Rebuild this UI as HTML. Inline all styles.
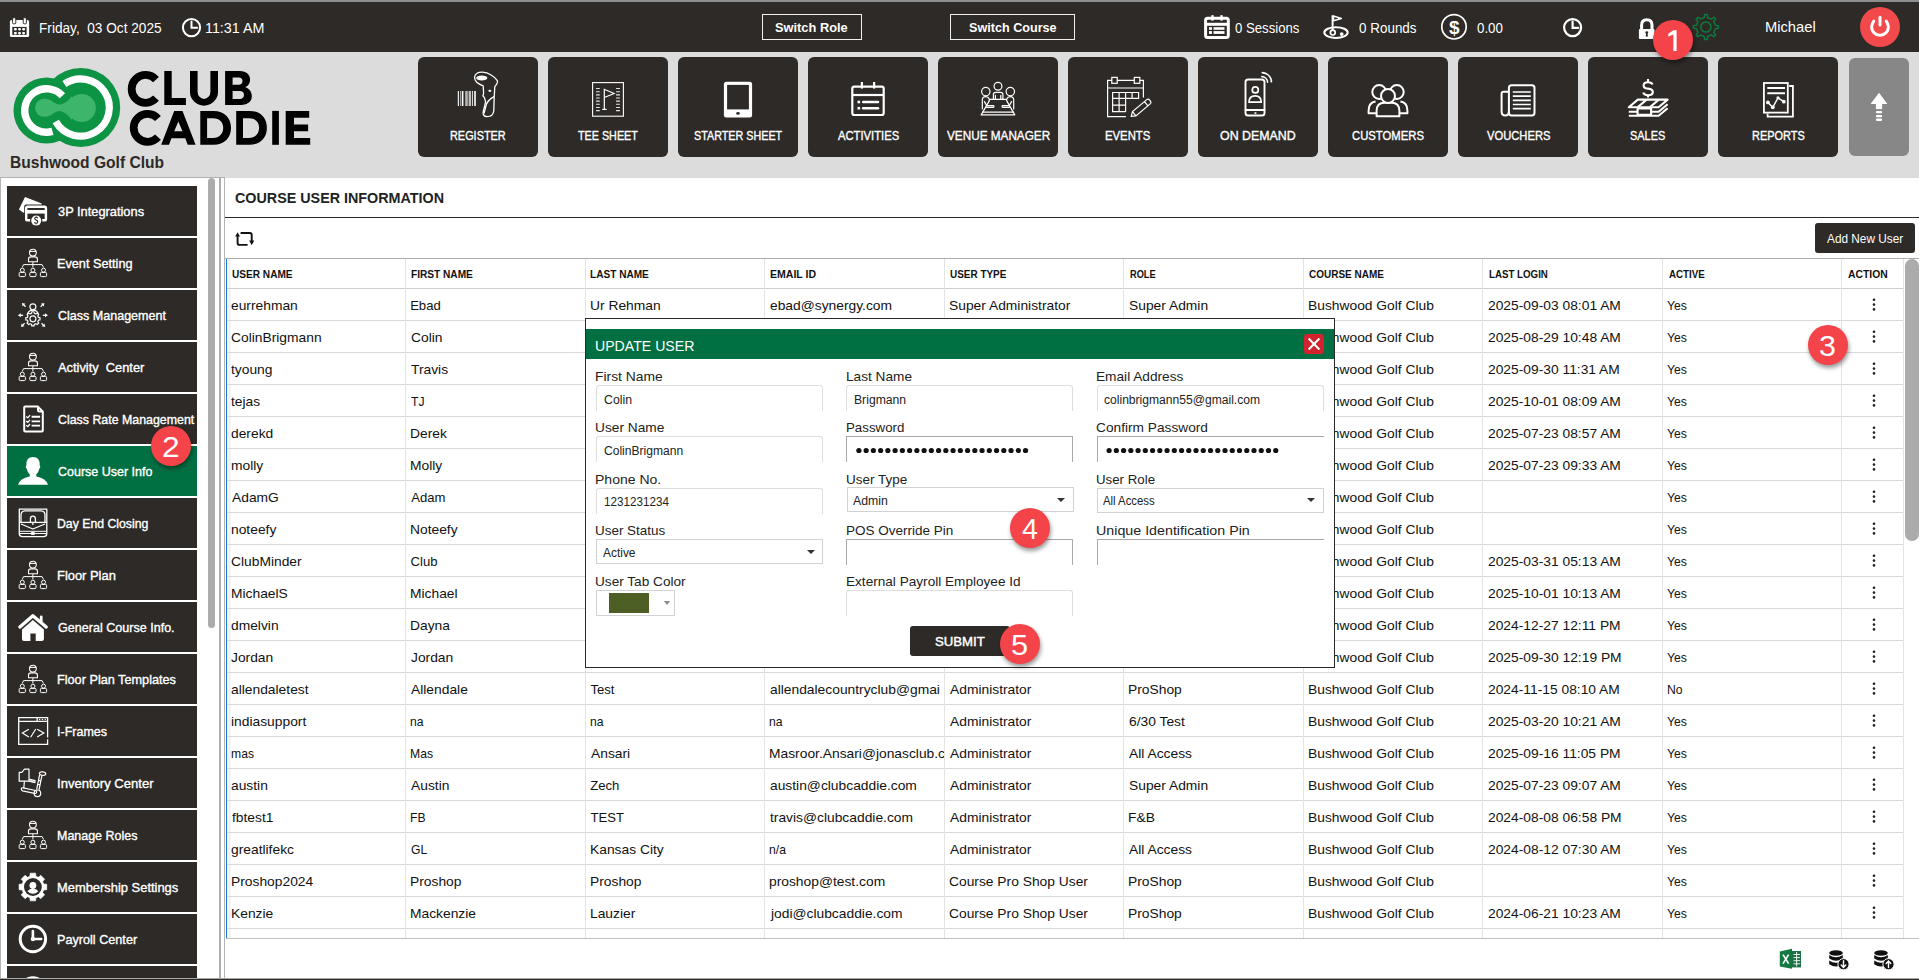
<!DOCTYPE html><html><head><meta charset="utf-8"><style>
*{box-sizing:border-box}
html,body{margin:0;padding:0}
body{width:1919px;height:980px;overflow:hidden;position:relative;font-family:"Liberation Sans",sans-serif;background:#fff;color:#111}
.a{position:absolute}
.tx{position:absolute;white-space:pre}
svg{position:absolute;overflow:visible}
.nb{position:absolute;top:57px;width:120px;height:100px;background:#2d2a27;border-radius:6px}
.si{position:absolute;left:7px;width:190px;height:50px;background:#2d2a27}
.badge{position:absolute;width:40px;height:40px;border-radius:50%;background:#f44449;box-shadow:1px 3px 4px rgba(0,0,0,.4)}
.hl{position:absolute;height:1px;background:#d9d9d9}
.vl{position:absolute;width:1px;background:#e3e3e3}
.inp{position:absolute;width:227px;height:26px;border:1px solid #dedede;border-bottom:none;border-radius:3px 3px 0 0}
.sel{position:absolute;width:227px;height:25px;border:1px solid #d2d2d2}
.caret{position:absolute;width:0;height:0;border-left:4px solid transparent;border-right:4px solid transparent;border-top:4.5px solid #333}
</style></head><body>
<div class="a" style="left:0;top:0;width:1919px;height:2px;background:#8e8e8e"></div>
<div class="a" style="left:0;top:2px;width:1919px;height:50px;background:#2d2a27"></div>
<div class="a" style="left:0;top:52px;width:1919px;height:126px;background:#dcdcdc"></div>
<div class="tx" style="left:38.71px;top:21px;font-size:14px;line-height:14px;color:#fff;transform:scaleX(0.9749);transform-origin:0 0;">Friday,  03 Oct 2025</div>
<div class="tx" style="left:205.43px;top:21px;font-size:14px;line-height:14px;color:#fff;transform:scaleX(1.0232);transform-origin:0 0;">11:31 AM</div>
<div class="a" style="left:762px;top:14px;width:100px;height:26px;border:1.2px solid #f0f0f0"></div>
<div class="tx" style="left:775.28px;top:21px;font-size:13.4px;line-height:13.4px;color:#fff;font-weight:bold;transform:scaleX(0.9578);transform-origin:0 0;">Switch Role</div>
<div class="a" style="left:950px;top:14px;width:125px;height:26px;border:1.2px solid #f0f0f0"></div>
<div class="tx" style="left:968.68px;top:21px;font-size:13.4px;line-height:13.4px;color:#fff;font-weight:bold;transform:scaleX(0.9423);transform-origin:0 0;">Switch Course</div>
<div class="tx" style="left:1235.34px;top:21px;font-size:14px;line-height:14px;color:#fff;transform:scaleX(0.9395);transform-origin:0 0;">0 Sessions</div>
<div class="tx" style="left:1358.73px;top:21px;font-size:14px;line-height:14px;color:#fff;transform:scaleX(0.9603);transform-origin:0 0;">0 Rounds</div>
<div class="tx" style="left:1477.03px;top:21px;font-size:14px;line-height:14px;color:#fff;transform:scaleX(0.9524);transform-origin:0 0;">0.00</div>
<div class="tx" style="left:1764.62px;top:20px;font-size:14px;line-height:14px;color:#fff;transform:scaleX(1.0504);transform-origin:0 0;">Michael</div>
<svg class="a" style="left:0;top:0" width="1919" height="52" viewBox="0 0 1919 52">
<rect x="9.9" y="20" width="19.2" height="17.1" rx="1.6" fill="#fff"/>
<rect x="12.3" y="26.9" width="14.3" height="8" fill="#2d2a27"/>
<g fill="#fff"><rect x="14" y="28" width="2.8" height="2.4" rx=".8"/><rect x="18.1" y="28" width="2.8" height="2.4" rx=".8"/><rect x="22.2" y="28" width="2.8" height="2.4" rx=".8"/>
<rect x="14" y="32" width="2.8" height="2.4" rx=".8"/><rect x="18.1" y="32" width="2.8" height="2.4" rx=".8"/><rect x="22.2" y="32" width="2.8" height="2.4" rx=".8"/></g>
<rect x="12.6" y="17.8" width="3.2" height="6" rx="1" fill="#fff" stroke="#2d2a27" stroke-width="1"/>
<rect x="23.2" y="17.8" width="3.2" height="6" rx="1" fill="#fff" stroke="#2d2a27" stroke-width="1"/>
<circle cx="191.5" cy="27.6" r="8.6" fill="none" stroke="#fff" stroke-width="2"/>
<path d="M191.5,21.6 V27.8 H197.2" fill="none" stroke="#fff" stroke-width="2" stroke-linecap="round"/>
<g fill="none" stroke="#fff">
<rect x="1205.6" y="18.3" width="22.7" height="19.3" rx="2" stroke-width="3"/>
<line x1="1205" y1="24.3" x2="1229" y2="24.3" stroke-width="3"/>
<line x1="1212.5" y1="15.2" x2="1212.5" y2="20.6" stroke-width="2.4"/>
<line x1="1221.5" y1="15.2" x2="1221.5" y2="20.6" stroke-width="2.4"/>
</g>
<g fill="#fff"><rect x="1209" y="27.2" width="3" height="2.6"/><rect x="1213.5" y="27.2" width="11" height="2.6"/><rect x="1209" y="31.1" width="3" height="2.8"/><rect x="1213.5" y="31.1" width="11" height="2.8"/></g>
<g fill="none" stroke="#fff" stroke-width="2">
<ellipse cx="1336" cy="32.6" rx="11.7" ry="5.4"/>
<line x1="1332.6" y1="15.3" x2="1332.6" y2="31"/>
<circle cx="1332.8" cy="32.6" r="2.4" stroke-width="1.7"/>
</g>
<path d="M1333.4,16 L1341.3,18.4 L1333.4,20.7 Z" fill="none" stroke="#fff" stroke-width="1.6" stroke-linejoin="round"/>
<circle cx="1341.7" cy="34.1" r="1.9" fill="#fff"/>
<circle cx="1454" cy="26.8" r="12.2" fill="none" stroke="#fff" stroke-width="1.7"/>
<text x="1454.2" y="33.6" font-size="19" font-weight="bold" text-anchor="middle" fill="#fff" font-family="Liberation Sans">$</text>
<circle cx="1572.6" cy="27.6" r="8.5" fill="none" stroke="#fff" stroke-width="2.2"/>
<path d="M1572.6,21.6 V27.8 H1578.3" fill="none" stroke="#fff" stroke-width="2.2" stroke-linecap="round"/>
<path d="M1641.6,29.5 V25.2 Q1641.6,19.8 1646.8,19.8 Q1652,19.8 1652,25.2 V29.5" fill="none" stroke="#fff" stroke-width="3"/>
<rect x="1638.9" y="28.9" width="15.6" height="10.2" rx="1" fill="#fff"/>
<circle cx="1646.8" cy="32.6" r="1.4" fill="#2d2a27"/><path d="M1646.2,33 L1645.6,36.6 H1648 L1647.4,33 Z" fill="#2d2a27"/>
<path d="M1715.34,25.28 L1718.43,25.72 L1718.43,28.28 L1715.34,28.72 L1713.80,32.46 L1715.67,34.96 L1713.86,36.77 L1711.36,34.90 L1707.62,36.44 L1707.18,39.53 L1704.62,39.53 L1704.18,36.44 L1700.44,34.90 L1697.94,36.77 L1696.13,34.96 L1698.00,32.46 L1696.46,28.72 L1693.37,28.28 L1693.37,25.72 L1696.46,25.28 L1698.00,21.54 L1696.13,19.04 L1697.94,17.23 L1700.44,19.10 L1704.18,17.56 L1704.62,14.47 L1707.18,14.47 L1707.62,17.56 L1711.36,19.10 L1713.86,17.23 L1715.67,19.04 L1713.80,21.54 Z" fill="none" stroke="#0a7a3d" stroke-width="1.5" stroke-linejoin="round"/>
<circle cx="1705.9" cy="27" r="5.1" fill="none" stroke="#0a7a3d" stroke-width="1.5"/>
<circle cx="1880" cy="27" r="20" fill="#f24a4c"/>
<path d="M1873.8,21.2 A8.4,8.4 0 1 0 1886.2,21.2" fill="none" stroke="#fff" stroke-width="3" stroke-linecap="round"/>
<line x1="1880" y1="17.2" x2="1880" y2="25" stroke="#fff" stroke-width="3" stroke-linecap="round"/>
</svg>
<svg class="a" style="left:0;top:52px" width="330" height="126" viewBox="0 52 330 126">
<g fill="#0c9444"><circle cx="46.5" cy="110.5" r="33"/><circle cx="80.7" cy="107.5" r="39.5"/></g>
<path d="M62.4,95.67 A21.75,21.75 0 1 0 52.5,131.4" fill="none" stroke="#fff" stroke-width="7.4"/>
<path d="M64.38,84.02 A28.6,28.6 0 1 1 55.73,121.45" fill="none" stroke="#fff" stroke-width="7.2"/>
<g fill="#3db56a"><circle cx="44" cy="107.8" r="9"/><circle cx="81.8" cy="108" r="14"/>
<path d="M44,98.8 Q50,99 54,102.5 Q57,104.6 60,104.4 Q66,104 72,96 L72,120 Q66,112 60,111 Q57,110.8 54,113 Q50,116.6 44,116.8 Z"/></g>
<g fill="#000" fill-rule="evenodd">
<path d="M155.97,79.57 A13.95,13.95 0 1 0 155.97,98.23" fill="none" stroke="#000" stroke-width="7.8"/>
<path d="M164.3,71.1 H171.7 V97.9 H185.9 V104.9 H164.3 Z"/>
<path d="M190,71.1 H197.6 V91.7 A6.4,7.2 0 0 0 210.4,91.7 V71.1 H218 V91.7 A14,14 0 0 1 190,91.7 Z"/>
<path d="M225.1,71.1 H239.8 C246.5,71.1 250.1,74.8 250.1,79.6 C250.1,83.2 248.2,86 245.2,87.3 C249.3,88.6 251.8,92 251.8,96.2 C251.8,101.6 247.7,104.9 241,104.9 H225.1 Z M232.6,77.5 H238.8 C241.2,77.5 242.5,78.8 242.5,81.1 C242.5,83.4 241.2,84.8 238.8,84.8 H232.6 Z M232.6,91.1 H239.8 C242.5,91.1 244,92.6 244,95 C244,97.4 242.5,98.9 239.8,98.9 H232.6 Z"/>
<path d="M157.97,118.5 A13.95,13.95 0 1 0 157.97,137.2" fill="none" stroke="#000" stroke-width="7.8"/>
<path d="M161.2,144.8 L174.2,110.9 H182.5 L195.6,144.8 H187.7 L185.3,138.2 H171.4 L169,144.8 Z M178.35,121.6 L174.2,131.2 H182.5 Z"/>
<path d="M200.3,110.9 H213.5 C224.5,110.9 231,117.8 231,127.85 C231,137.9 224.5,144.8 213.5,144.8 H200.3 Z M207.1,118.2 H213 C219.5,118.2 223.2,122 223.2,127.85 C223.2,133.9 219.5,138 213,138 H207.1 Z"/>
<path d="M236.2,110.9 H249.4 C260.4,110.9 266.9,117.8 266.9,127.85 C266.9,137.9 260.4,144.8 249.4,144.8 H236.2 Z M243,118.2 H248.9 C255.4,118.2 259.1,122 259.1,127.85 C259.1,133.9 255.4,138 248.9,138 H243 Z"/>
<path d="M272.2,110.9 H278.9 V144.8 H272.2 Z"/>
<path d="M285.7,110.9 H309.2 V117.7 H294 V124.4 H308.1 V131.2 H294 V138 H310.2 V144.8 H285.7 Z"/>
</g>
</svg>
<div class="tx" style="left:9.79px;top:155px;font-size:15.6px;line-height:15.6px;color:#2d2a27;font-weight:bold;transform:scaleX(0.9989);transform-origin:0 0;">Bushwood Golf Club</div>
<div class="nb" style="left:418px"></div>
<svg class="a" style="left:418px;top:57px" width="120" height="100" viewBox="0 0 120 100">
<g fill="none" stroke="#fff" stroke-width="1.3" stroke-linejoin="round">
<path d="M56.6,20.5 C56.6,16.5 60.5,15 64.5,15.2 C70.5,15.6 76.5,19.5 79.3,23.6 C80.2,25.2 78.8,27.3 76.8,29.6 L76.2,40 L75.8,53.5 C75.5,57.5 72.5,59.6 69,59.6 C66,59.6 64.6,57.6 65.2,55 C65.8,52.2 67,48 67.6,44.6 L66.4,40.6 L64.9,38.8 L65.6,36.8 L65.2,28.8 C61.8,27.6 56.6,25.5 56.6,20.5 Z"/>
<path d="M76,39.6 C71.5,42 68.5,45.5 67.8,49.5 L66,56.5"/>
</g>
<ellipse cx="63.8" cy="20.9" rx="5.6" ry="2.5" fill="#fff"/>
<ellipse cx="71.8" cy="33.8" rx="1.5" ry="1.1" fill="#fff"/>
<g fill="#fff">
<rect x="39.8" y="34" width="1.1" height="15"/>
<rect x="42" y="34" width="0.7" height="15" opacity=".8"/>
<rect x="43.8" y="34" width="1.6" height="15"/>
<rect x="47.2" y="34" width="2.6" height="15" opacity=".65"/>
<rect x="50.6" y="34" width="2.5" height="15" opacity=".7"/>
<rect x="54" y="34" width="1" height="15" opacity=".8"/>
<rect x="56.2" y="34" width="1.6" height="15"/>
</g></svg>
<div class="tx" style="left:450.03px;top:130px;font-size:12.6px;line-height:12.6px;color:#fff;transform:scaleX(0.8652);transform-origin:0 0;-webkit-text-stroke:0.35px #fff">REGISTER</div>
<div class="nb" style="left:548px"></div>
<svg class="a" style="left:548px;top:57px" width="120" height="100" viewBox="0 0 120 100"><rect x="44.6" y="25.6" width="30.8" height="33.6" fill="none" stroke="#fff" stroke-width="1.1"/>
<rect x="48" y="31.00" width="3.8" height="1.1" rx=".5" fill="#fff" opacity=".9"/>
<rect x="68" y="31.00" width="4" height="1.1" rx=".5" fill="#fff" opacity=".9"/>
<rect x="48" y="34.15" width="3.8" height="1.1" rx=".5" fill="#fff" opacity=".9"/>
<rect x="68" y="34.15" width="4" height="1.1" rx=".5" fill="#fff" opacity=".9"/>
<rect x="48" y="37.30" width="3.8" height="1.1" rx=".5" fill="#fff" opacity=".9"/>
<rect x="68" y="37.30" width="4" height="1.1" rx=".5" fill="#fff" opacity=".9"/>
<rect x="48" y="40.45" width="3.8" height="1.1" rx=".5" fill="#fff" opacity=".9"/>
<rect x="68" y="40.45" width="4" height="1.1" rx=".5" fill="#fff" opacity=".9"/>
<rect x="48" y="43.60" width="3.8" height="1.1" rx=".5" fill="#fff" opacity=".9"/>
<rect x="68" y="43.60" width="4" height="1.1" rx=".5" fill="#fff" opacity=".9"/>
<rect x="48" y="46.75" width="3.8" height="1.1" rx=".5" fill="#fff" opacity=".9"/>
<rect x="68" y="46.75" width="4" height="1.1" rx=".5" fill="#fff" opacity=".9"/>
<rect x="48" y="49.90" width="3.8" height="1.1" rx=".5" fill="#fff" opacity=".9"/>
<rect x="68" y="49.90" width="4" height="1.1" rx=".5" fill="#fff" opacity=".9"/>
<rect x="48" y="53.05" width="3.8" height="1.1" rx=".5" fill="#fff" opacity=".9"/>
<rect x="68" y="53.05" width="4" height="1.1" rx=".5" fill="#fff" opacity=".9"/>
<g fill="none" stroke="#fff" stroke-width="1.2"><path d="M56.3,52.4 V32.3 L66.1,36.5 L56.3,40.5"/><path d="M54.2,52.4 H58.6"/></g></svg>
<div class="tx" style="left:578.28px;top:130px;font-size:12.6px;line-height:12.6px;color:#fff;transform:scaleX(0.8548);transform-origin:0 0;-webkit-text-stroke:0.35px #fff">TEE SHEET</div>
<div class="nb" style="left:678px"></div>
<svg class="a" style="left:678px;top:57px" width="120" height="100" viewBox="0 0 120 100"><rect x="45.9" y="24.8" width="28.2" height="35.6" rx="2.5" fill="#fff"/>
<rect x="49.1" y="27.9" width="21.8" height="24.5" fill="#2d2a27"/>
<ellipse cx="60" cy="56.4" rx="1.8" ry="1.3" fill="#2d2a27"/></svg>
<div class="tx" style="left:693.52px;top:130px;font-size:12.6px;line-height:12.6px;color:#fff;transform:scaleX(0.8552);transform-origin:0 0;-webkit-text-stroke:0.35px #fff">STARTER SHEET</div>
<div class="nb" style="left:808px"></div>
<svg class="a" style="left:808px;top:57px" width="120" height="100" viewBox="0 0 120 100"><g fill="none" stroke="#fff" stroke-width="2.2">
<rect x="44.3" y="29.6" width="31.4" height="28.4" rx="2"/>
<line x1="44.3" y1="38" x2="75.7" y2="38"/>
<line x1="53.9" y1="25" x2="53.9" y2="31.6"/>
<line x1="66.1" y1="25" x2="66.1" y2="31.6"/>
<line x1="55.2" y1="45" x2="70" y2="45" stroke-linecap="round" stroke-width="2.5"/>
<line x1="55.2" y1="51.2" x2="70" y2="51.2" stroke-linecap="round" stroke-width="2.5"/>
</g>
<rect x="49.5" y="43.7" width="2.6" height="2.6" fill="#fff"/>
<rect x="49.5" y="49.9" width="2.6" height="2.6" fill="#fff"/></svg>
<div class="tx" style="left:837.60px;top:130px;font-size:12.6px;line-height:12.6px;color:#fff;transform:scaleX(0.8928);transform-origin:0 0;-webkit-text-stroke:0.35px #fff">ACTIVITIES</div>
<div class="nb" style="left:938px"></div>
<svg class="a" style="left:938px;top:57px" width="120" height="100" viewBox="0 0 120 100"><g fill="none" stroke="#fff" stroke-width="1.2" stroke-linejoin="round" stroke-linecap="round">
<circle cx="60" cy="29.2" r="3.9"/>
<circle cx="47.8" cy="34.6" r="4.2"/>
<circle cx="72.3" cy="34.6" r="4.2"/>
<path d="M55.4,42.2 V37.6 Q55.4,35.4 57.6,35.4 H62.7 Q64.9,35.4 64.9,37.6 V42.2"/>
<path d="M57.4,42.2 V38.4 M62.8,42.2 V38.4"/>
<path d="M52.2,42.4 H67.8 Q69.2,42.4 68.6,43.6 L76.8,57.9 H43.2 L51.4,43.6 Q50.8,42.4 52.2,42.4 Z"/>
<path d="M44.6,55.2 H75.4"/>
<path d="M44.3,52 V43 Q44.3,39.6 47.8,39.6 Q50.3,39.6 51.3,42"/>
<path d="M46.4,44.6 L48.8,48.6 H55.4 Q56.6,49.4 55.4,50.4 H48.8 L47.6,50"/>
<path d="M75.7,52 V43 Q75.7,39.6 72.2,39.6 Q69.7,39.6 68.7,42"/>
<path d="M73.6,44.6 L71.2,48.6 H64.6 Q63.4,49.4 64.6,50.4 H71.2 L72.4,50"/>
</g></svg>
<div class="tx" style="left:946.60px;top:130px;font-size:12.6px;line-height:12.6px;color:#fff;transform:scaleX(0.9331);transform-origin:0 0;-webkit-text-stroke:0.35px #fff">VENUE MANAGER</div>
<div class="nb" style="left:1068px"></div>
<svg class="a" style="left:1068px;top:57px" width="120" height="100" viewBox="0 0 120 100"><g fill="none" stroke="#fff" stroke-width="1.2">
<path d="M57.9,59.7 H39.6 V23.3 H75.4 V40.5"/>
<line x1="39.6" y1="31" x2="75.4" y2="31"/>
<rect x="43.8" y="20.4" width="5.4" height="5.9" fill="#2d2a27"/>
<rect x="66.3" y="20.4" width="5.5" height="5.9" fill="#2d2a27"/>
<path d="M44.6,35.5 H70.6 V41.4 H44.6 Z M51.1,35.5 V54.7 M57.6,35.5 V54.7 M64.1,35.5 V41.4 M44.6,41.4 V54.7 H57.6 M44.6,48.1 H57.6"/>
<path d="M63.2,59.3 L64.5,54.6 L78.8,42.6 Q80.3,41.4 81.6,43 L82.6,44.3 Q83.6,45.7 82.2,46.9 L67.9,58.9 Z M64.5,54.6 L67.9,58.9 M76.5,44.6 L79.9,48.8"/>
</g></svg>
<div class="tx" style="left:1105.29px;top:130px;font-size:12.6px;line-height:12.6px;color:#fff;transform:scaleX(0.9000);transform-origin:0 0;-webkit-text-stroke:0.35px #fff">EVENTS</div>
<div class="nb" style="left:1198px"></div>
<svg class="a" style="left:1198px;top:57px" width="120" height="100" viewBox="0 0 120 100"><g fill="none" stroke="#fff" stroke-width="1.9" stroke-linecap="round">
<rect x="47.5" y="22.5" width="19" height="36" rx="2.6"/>
<line x1="47.5" y1="53" x2="66.5" y2="53"/>
<circle cx="57.3" cy="32.9" r="3" stroke-width="1.7"/>
<path d="M51,45.2 Q51,38.8 57.1,38.8 Q63.2,38.8 63.2,45.2 Z" stroke-width="1.7"/>
<path d="M63.8,19.6 A6,6 0 0 1 69.6,25.2" stroke-width="1.6"/>
<path d="M64.3,15.6 A10,10 0 0 1 73.4,23.6" stroke-width="1.6"/>
</g>
<ellipse cx="57.4" cy="56.1" rx="1.3" ry=".8" fill="#fff"/>
<circle cx="73.3" cy="24.6" r="1" fill="#fff"/></svg>
<div class="tx" style="left:1220.04px;top:130px;font-size:12.6px;line-height:12.6px;color:#fff;transform:scaleX(0.9835);transform-origin:0 0;-webkit-text-stroke:0.35px #fff">ON DEMAND</div>
<div class="nb" style="left:1328px"></div>
<svg class="a" style="left:1328px;top:57px" width="120" height="100" viewBox="0 0 120 100"><g stroke="#fff" stroke-width="2" stroke-linejoin="round">
<path d="M48,56.3 H40.6 V53.5 Q40.6,45.6 47.6,44.6" fill="none"/>
<path d="M72,56.3 H79.4 V53.5 Q79.4,45.6 72.4,44.6" fill="none"/>
<circle cx="51.2" cy="35" r="6.9" fill="none"/>
<circle cx="68.8" cy="35" r="6.9" fill="none"/>
<path d="M48.6,59.3 V54 Q48.6,45.8 56.5,45.8 H63.5 Q71.4,45.8 71.4,54 V59.3 Z" fill="#2d2a27"/>
<circle cx="60" cy="38.9" r="7" fill="#2d2a27"/>
</g></svg>
<div class="tx" style="left:1352.03px;top:130px;font-size:12.6px;line-height:12.6px;color:#fff;transform:scaleX(0.8973);transform-origin:0 0;-webkit-text-stroke:0.35px #fff">CUSTOMERS</div>
<div class="nb" style="left:1458px"></div>
<svg class="a" style="left:1458px;top:57px" width="120" height="100" viewBox="0 0 120 100"><g fill="none" stroke="#fff" stroke-width="2" stroke-linejoin="round">
<rect x="50.9" y="28.3" width="25.6" height="30.1" rx="2.6"/>
<path d="M50.9,34.7 H45.6 Q43.6,34.7 43.6,36.7 V54.4 Q43.6,58.4 47.3,58.4 Q50.9,58.4 50.9,54.4"/>
<path d="M54.8,35 H72.8 M54.8,39.2 H72.8 M54.8,43.4 H72.8 M54.8,47.5 H72.8 M54.8,51.7 H72.8" stroke-width="1.7"/>
</g></svg>
<div class="tx" style="left:1486.70px;top:130px;font-size:12.6px;line-height:12.6px;color:#fff;transform:scaleX(0.8889);transform-origin:0 0;-webkit-text-stroke:0.35px #fff">VOUCHERS</div>
<div class="nb" style="left:1588px"></div>
<svg class="a" style="left:1588px;top:57px" width="120" height="100" viewBox="0 0 120 100"><g fill="none" stroke="#fff" stroke-width="2.1" stroke-linejoin="round">
<path d="M64.6,27.5 Q63.8,25.2 60,25.2 Q55.6,25.2 55.6,28.4 Q55.6,31.2 60,31.6 Q64.8,32 64.8,35.2 Q64.8,38.2 60,38.2 Q55.9,38.2 55.3,35.6"/>
<path d="M60,22 V25.2 M60,38.2 V40.4"/>
<path d="M40.8,50.3 L49.8,42.6 H79.6 L70.6,50.3 Z"/>
<path d="M49.6,50.3 L58.6,42.6 M61.8,50.3 L70.8,42.6"/>
<path d="M40.8,54.8 H49.6 M63.1,54.8 H70.6 L79.6,47.2"/>
<path d="M40.8,58.8 H70.6 L79.6,51.2"/>
<rect x="49.6" y="51.4" width="13.5" height="6.4" fill="#2d2a27"/>
</g></svg>
<div class="tx" style="left:1630.41px;top:130px;font-size:12.6px;line-height:12.6px;color:#fff;transform:scaleX(0.8683);transform-origin:0 0;-webkit-text-stroke:0.35px #fff">SALES</div>
<div class="nb" style="left:1718px"></div>
<svg class="a" style="left:1718px;top:57px" width="120" height="100" viewBox="0 0 120 100"><g fill="none" stroke="#fff" stroke-width="1.8">
<rect x="45.9" y="26" width="23.9" height="29.6"/>
<path d="M49.6,56.5 V59.6 H74.9 V29 H71.2"/>
<path d="M49.3,31 H67 M49.3,36.2 H67" stroke-width="2"/>
<polyline points="49.9,45.4 54.8,50.3 60,40.8 65.8,44.7" stroke-width="1.4"/>
</g>
<g fill="#fff"><circle cx="49.9" cy="45.4" r="1.9"/><circle cx="54.8" cy="50.3" r="1.9"/><circle cx="60" cy="40.8" r="1.6"/><circle cx="65.8" cy="44.7" r="1.9"/></g></svg>
<div class="tx" style="left:1751.52px;top:130px;font-size:12.6px;line-height:12.6px;color:#fff;transform:scaleX(0.8689);transform-origin:0 0;-webkit-text-stroke:0.35px #fff">REPORTS</div>
<div class="a" style="left:1849px;top:58px;width:60px;height:98px;background:#878787;border-radius:6px"></div>
<svg class="a" style="left:1849px;top:58px" width="60" height="98" viewBox="0 0 60 98"><g fill="#fff">
<polygon points="30,34.8 21.6,46 38.4,46"/>
<rect x="26.9" y="45.5" width="6.2" height="5.6"/>
<rect x="26.9" y="53" width="6.2" height="2.3" rx="1"/>
<rect x="26.9" y="56.9" width="6.2" height="2.3" rx="1"/>
<rect x="26.9" y="60.5" width="6.2" height="2.4" rx="1.2"/>
</g></svg>
<div class="a" style="left:0;top:177px;width:225px;height:803px;background:#fff;border-top:1px solid #b0b0b0"></div>
<div class="a" style="left:0;top:177px;width:1px;height:803px;background:#b4b4b4"></div>
<div class="si" style="top:186px;background:#2d2a27"></div>
<svg class="a" style="left:7px;top:186px" width="50" height="50" viewBox="0 0 50 50"><polygon points="11.9,23.6 18,10.9 34.8,17.4 33.5,22 16.4,26.8" fill="#fff"/>
<rect x="17.2" y="18.5" width="23.7" height="17.6" rx="2" fill="#2d2a27"/>
<rect x="19.2" y="20.7" width="19.7" height="13.6" rx="1.4" fill="#2d2a27" stroke="#fff" stroke-width="2.45"/>
<rect x="19" y="24" width="20.2" height="3.6" fill="#fff"/>
<circle cx="29.2" cy="34.6" r="6.2" fill="#2d2a27"/>
<circle cx="29.2" cy="34.6" r="5" fill="#fff"/>
<path d="M30.8,32.3 Q30.3,31.3 29.2,31.3 Q27.7,31.3 27.7,32.6 Q27.7,33.8 29.2,34.1 Q30.8,34.4 30.8,35.8 Q30.8,37.2 29.2,37.2 Q27.9,37.2 27.5,36.2 M29.2,30.2 V31.3 M29.2,37.2 V38.3" fill="none" stroke="#2d2a27" stroke-width="1.1"/></svg>
<div class="tx" style="left:57.95px;top:206px;font-size:12.8px;line-height:12.8px;color:#fff;transform:scaleX(1.0024);transform-origin:0 0;-webkit-text-stroke:0.35px #fff">3P Integrations</div>
<div class="si" style="top:238px;background:#2d2a27"></div>
<svg class="a" style="left:7px;top:238px" width="50" height="50" viewBox="0 0 50 50"><g fill="none" stroke="#fff" stroke-width="1.1">
<circle cx="25.9" cy="14.6" r="3.4"/>
<path d="M22.6,13.4 H29.2"/>
<path d="M21.5,23.8 V21 Q21.5,18.9 24,18.9 H27.9 Q30.4,18.9 30.4,21 V23.8 Z"/>
<path d="M25.9,23.8 V29.4 M15.2,29.5 L16.6,26.6 H35.1 L36.6,29.5" stroke-width="1"/>
<g stroke-width="1">
<circle cx="15.3" cy="32.2" r="2"/><rect x="12.2" y="34.4" width="6.2" height="4.2" rx="1"/>
<circle cx="25.9" cy="32.2" r="2"/><rect x="22.8" y="34.4" width="6.2" height="4.2" rx="1"/>
<circle cx="36.5" cy="32.2" r="2"/><rect x="33.4" y="34.4" width="6.2" height="4.2" rx="1"/>
</g></g></svg>
<div class="tx" style="left:57.38px;top:258px;font-size:12.8px;line-height:12.8px;color:#fff;transform:scaleX(0.9919);transform-origin:0 0;-webkit-text-stroke:0.35px #fff">Event Setting</div>
<div class="si" style="top:290px;background:#2d2a27"></div>
<svg class="a" style="left:7px;top:290px" width="50" height="50" viewBox="0 0 50 50"><g fill="none" stroke="#fff" stroke-width="1.15">
<path d="M31.44,27.47 L33.00,27.62 L33.00,29.98 L31.44,30.13 L30.76,31.78 L31.76,32.99 L30.09,34.66 L28.88,33.66 L27.23,34.34 L27.08,35.90 L24.72,35.90 L24.57,34.34 L22.92,33.66 L21.71,34.66 L20.04,32.99 L21.04,31.78 L20.36,30.13 L18.80,29.98 L18.80,27.62 L20.36,27.47 L21.04,25.82 L20.04,24.61 L21.71,22.94 L22.92,23.94 L24.57,23.26 L24.72,21.70 L27.08,21.70 L27.23,23.26 L28.88,23.94 L30.09,22.94 L31.76,24.61 L30.76,25.82 Z" stroke-linejoin="round"/>
<circle cx="25.9" cy="28.8" r="3.0"/>
<path d="M20.4,24.4 A5.6,5.2 0 0 1 31.4,24.4"/>
<circle cx="25.9" cy="16.8" r="3.0"/></g>
<polygon points="14.90,13.00 18.44,13.71 15.61,16.54" fill="#fff"/><line x1="17.02" y1="15.12" x2="18.58" y2="16.68" stroke="#fff" stroke-width="1.3"/><polygon points="37.40,13.00 36.69,16.54 33.86,13.71" fill="#fff"/><line x1="35.28" y1="15.12" x2="33.72" y2="16.68" stroke="#fff" stroke-width="1.3"/><polygon points="10.90,25.30 13.90,23.30 13.90,27.30" fill="#fff"/><line x1="13.90" y1="25.30" x2="16.10" y2="25.30" stroke="#fff" stroke-width="1.3"/><polygon points="41.00,25.30 38.00,27.30 38.00,23.30" fill="#fff"/><line x1="38.00" y1="25.30" x2="35.80" y2="25.30" stroke="#fff" stroke-width="1.3"/><polygon points="13.90,37.00 14.61,33.46 17.44,36.29" fill="#fff"/><line x1="16.02" y1="34.88" x2="17.58" y2="33.32" stroke="#fff" stroke-width="1.3"/><polygon points="38.20,37.00 34.66,36.29 37.49,33.46" fill="#fff"/><line x1="36.08" y1="34.88" x2="34.52" y2="33.32" stroke="#fff" stroke-width="1.3"/></svg>
<div class="tx" style="left:57.77px;top:310px;font-size:12.8px;line-height:12.8px;color:#fff;transform:scaleX(0.9787);transform-origin:0 0;-webkit-text-stroke:0.35px #fff">Class Management</div>
<div class="si" style="top:342px;background:#2d2a27"></div>
<svg class="a" style="left:7px;top:342px" width="50" height="50" viewBox="0 0 50 50"><g fill="none" stroke="#fff" stroke-width="1.1">
<circle cx="25.9" cy="14.6" r="3.4"/>
<path d="M22.6,13.4 H29.2"/>
<path d="M21.5,23.8 V21 Q21.5,18.9 24,18.9 H27.9 Q30.4,18.9 30.4,21 V23.8 Z"/>
<path d="M25.9,23.8 V29.4 M15.2,29.5 L16.6,26.6 H35.1 L36.6,29.5" stroke-width="1"/>
<g stroke-width="1">
<circle cx="15.3" cy="32.2" r="2"/><rect x="12.2" y="34.4" width="6.2" height="4.2" rx="1"/>
<circle cx="25.9" cy="32.2" r="2"/><rect x="22.8" y="34.4" width="6.2" height="4.2" rx="1"/>
<circle cx="36.5" cy="32.2" r="2"/><rect x="33.4" y="34.4" width="6.2" height="4.2" rx="1"/>
</g></g></svg>
<div class="tx" style="left:58.40px;top:362px;font-size:12.8px;line-height:12.8px;color:#fff;transform:scaleX(1.0036);transform-origin:0 0;-webkit-text-stroke:0.35px #fff">Activity&nbsp; Center</div>
<div class="si" style="top:394px;background:#2d2a27"></div>
<svg class="a" style="left:7px;top:394px" width="50" height="50" viewBox="0 0 50 50"><g fill="none" stroke="#fff" stroke-width="2" stroke-linejoin="round">
<path d="M18.2,12.6 H31 L35.8,17.6 V36.4 Q35.8,37.4 34.8,37.4 H18.2 Q17.2,37.4 17.2,36.4 V13.6 Q17.2,12.6 18.2,12.6 Z"/>
<path d="M31,12.8 V16.2 Q31,17.6 32.4,17.6 H35.6"/>
<path d="M24.6,22.8 H33.1 M24.6,27.4 H33.1 M24.6,31.6 H33.1" stroke-width="1.9"/>
<path d="M19.2,22.4 L20.8,23.8 L23,21.2 M19.2,27 L20.8,28.4 L23,25.8 M19.2,31.2 L20.8,32.6 L23,30" stroke-width="1.3"/>
</g></svg>
<div class="tx" style="left:57.78px;top:414px;font-size:12.8px;line-height:12.8px;color:#fff;transform:scaleX(0.9677);transform-origin:0 0;-webkit-text-stroke:0.35px #fff">Class Rate Management</div>
<div class="si" style="top:446px;background:#007043"></div>
<svg class="a" style="left:7px;top:446px" width="50" height="50" viewBox="0 0 50 50"><path d="M11.1,38.8 Q12.8,32.6 22.6,30.6 L22.8,28.6 Q20.2,25.8 19.6,22.6 Q18.6,22 18.8,20.4 Q19,19.4 19.4,19.2 Q19,11 26,11 Q33,11 32.7,19.2 Q33.1,19.4 33.2,20.4 Q33.4,22 32.4,22.6 Q31.8,25.8 29.2,28.6 L29.4,30.6 Q39.2,32.6 41,38.8 Z" fill="#fff"/></svg>
<div class="tx" style="left:57.78px;top:466px;font-size:12.8px;line-height:12.8px;color:#fff;transform:scaleX(0.9758);transform-origin:0 0;-webkit-text-stroke:0.35px #fff">Course User Info</div>
<div class="si" style="top:498px;background:#2d2a27"></div>
<svg class="a" style="left:7px;top:498px" width="50" height="50" viewBox="0 0 50 50"><g fill="none" stroke="#fff" stroke-width="1.3" stroke-linejoin="round">
<path d="M12.3,11.2 H39.8 V35.5 Q39.8,38.6 36.8,38.6 H15.3 Q12.3,38.6 12.3,35.5 Z"/>
<path d="M14,24 V17 Q14,13 18,12.8 H34 Q38,13 38,17 V24"/>
<path d="M12.3,24.4 H39.8"/>
<path d="M14,26 L25.9,31 L38,26"/>
<path d="M13,33.3 H39 M13,35.5 H39" stroke-width="1"/>
<path d="M23.4,24 V21 Q23.4,18.2 25.9,18.2 Q28.4,18.2 28.4,21 V24"/>
<path d="M25.9,24.4 V27"/>
<ellipse cx="25.9" cy="35.4" rx="1.8" ry="1"/>
</g></svg>
<div class="tx" style="left:57.42px;top:518px;font-size:12.8px;line-height:12.8px;color:#fff;transform:scaleX(0.9582);transform-origin:0 0;-webkit-text-stroke:0.35px #fff">Day End Closing</div>
<div class="si" style="top:550px;background:#2d2a27"></div>
<svg class="a" style="left:7px;top:550px" width="50" height="50" viewBox="0 0 50 50"><g fill="none" stroke="#fff" stroke-width="1.1">
<circle cx="25.9" cy="14.6" r="3.4"/>
<path d="M22.6,13.4 H29.2"/>
<path d="M21.5,23.8 V21 Q21.5,18.9 24,18.9 H27.9 Q30.4,18.9 30.4,21 V23.8 Z"/>
<path d="M25.9,23.8 V29.4 M15.2,29.5 L16.6,26.6 H35.1 L36.6,29.5" stroke-width="1"/>
<g stroke-width="1">
<circle cx="15.3" cy="32.2" r="2"/><rect x="12.2" y="34.4" width="6.2" height="4.2" rx="1"/>
<circle cx="25.9" cy="32.2" r="2"/><rect x="22.8" y="34.4" width="6.2" height="4.2" rx="1"/>
<circle cx="36.5" cy="32.2" r="2"/><rect x="33.4" y="34.4" width="6.2" height="4.2" rx="1"/>
</g></g></svg>
<div class="tx" style="left:57.37px;top:570px;font-size:12.8px;line-height:12.8px;color:#fff;transform:scaleX(1.0086);transform-origin:0 0;-webkit-text-stroke:0.35px #fff">Floor Plan</div>
<div class="si" style="top:602px;background:#2d2a27"></div>
<svg class="a" style="left:7px;top:602px" width="50" height="50" viewBox="0 0 50 50"><path d="M15,27.6 L25.9,18 L36.9,27.6 V37 Q36.9,39 34.9,39 H28.7 V31.4 H23.4 V39 H17 Q15,39 15,37 Z" fill="#fff"/>
<path d="M12.9,25 L25.9,13.8 L39.2,25" fill="none" stroke="#fff" stroke-width="3.4" stroke-linecap="round" stroke-linejoin="round"/>
<path d="M34.2,20.5 V15" stroke="#fff" stroke-width="2.8" stroke-linecap="round"/></svg>
<div class="tx" style="left:57.77px;top:622px;font-size:12.8px;line-height:12.8px;color:#fff;transform:scaleX(0.9816);transform-origin:0 0;-webkit-text-stroke:0.35px #fff">General Course Info.</div>
<div class="si" style="top:654px;background:#2d2a27"></div>
<svg class="a" style="left:7px;top:654px" width="50" height="50" viewBox="0 0 50 50"><g fill="none" stroke="#fff" stroke-width="1.1">
<circle cx="25.9" cy="14.6" r="3.4"/>
<path d="M22.6,13.4 H29.2"/>
<path d="M21.5,23.8 V21 Q21.5,18.9 24,18.9 H27.9 Q30.4,18.9 30.4,21 V23.8 Z"/>
<path d="M25.9,23.8 V29.4 M15.2,29.5 L16.6,26.6 H35.1 L36.6,29.5" stroke-width="1"/>
<g stroke-width="1">
<circle cx="15.3" cy="32.2" r="2"/><rect x="12.2" y="34.4" width="6.2" height="4.2" rx="1"/>
<circle cx="25.9" cy="32.2" r="2"/><rect x="22.8" y="34.4" width="6.2" height="4.2" rx="1"/>
<circle cx="36.5" cy="32.2" r="2"/><rect x="33.4" y="34.4" width="6.2" height="4.2" rx="1"/>
</g></g></svg>
<div class="tx" style="left:57.38px;top:674px;font-size:12.8px;line-height:12.8px;color:#fff;transform:scaleX(0.9913);transform-origin:0 0;-webkit-text-stroke:0.35px #fff">Floor Plan Templates</div>
<div class="si" style="top:706px;background:#2d2a27"></div>
<svg class="a" style="left:7px;top:706px" width="50" height="50" viewBox="0 0 50 50"><g fill="none" stroke="#fff" stroke-width="1.3">
<path d="M40.6,31.6 V11.7 H11.7 V38.4 H40.6 V33.2"/>
<path d="M11.7,15.4 H40.6 M30.2,11.7 V15.4"/>
<path d="M21.8,23.2 L15.4,27.1 L21.8,31 M30.2,23.2 L36.8,27.1 L30.2,31 M28.8,23 L23.6,31.2" stroke-width="1.2"/>
</g>
<g fill="#fff"><circle cx="32.6" cy="13.5" r=".7"/><circle cx="35.4" cy="13.5" r=".7"/><circle cx="38.2" cy="13.5" r=".7"/></g></svg>
<div class="tx" style="left:57.27px;top:726px;font-size:12.8px;line-height:12.8px;color:#fff;transform:scaleX(0.9778);transform-origin:0 0;-webkit-text-stroke:0.35px #fff">I-Frames</div>
<div class="si" style="top:758px;background:#2d2a27"></div>
<svg class="a" style="left:7px;top:758px" width="50" height="50" viewBox="0 0 50 50"><g fill="none" stroke="#fff" stroke-width="1.2" stroke-linejoin="round">
<path d="M14.9,14.4 L17.5,11.2 H22 V23.2 H12.2 V14.4 Z" />
<path d="M17.4,23.2 L16.8,30.2"/>
<path d="M14.3,31 Q14.3,29.5 16,29.8 L28.5,32.5 Q30,33 29.6,34.6 Q29,35.8 27.5,35.4 L15.5,32.8 Q14.3,32.5 14.3,31 Z"/>
<path d="M22,21 L28,22.6 V24.6 L22,23.2 M24,21.6 V23.6 M26,22 V24"/>
<path d="M32.6,16.8 L29.6,31.6 M35,17.2 L32,31.8 M30.6,26.4 L33,26.8 M31.4,22.4 L33.8,22.8"/>
<ellipse cx="35.6" cy="15.6" rx="3.2" ry="1.7" transform="rotate(10 35.6 15.6)"/>
<circle cx="30.4" cy="35.3" r="3.3"/>
</g></svg>
<div class="tx" style="left:57.22px;top:778px;font-size:12.8px;line-height:12.8px;color:#fff;transform:scaleX(1.0202);transform-origin:0 0;-webkit-text-stroke:0.35px #fff">Inventory Center</div>
<div class="si" style="top:810px;background:#2d2a27"></div>
<svg class="a" style="left:7px;top:810px" width="50" height="50" viewBox="0 0 50 50"><g fill="none" stroke="#fff" stroke-width="1.1">
<circle cx="25.9" cy="14.6" r="3.4"/>
<path d="M22.6,13.4 H29.2"/>
<path d="M21.5,23.8 V21 Q21.5,18.9 24,18.9 H27.9 Q30.4,18.9 30.4,21 V23.8 Z"/>
<path d="M25.9,23.8 V29.4 M15.2,29.5 L16.6,26.6 H35.1 L36.6,29.5" stroke-width="1"/>
<g stroke-width="1">
<circle cx="15.3" cy="32.2" r="2"/><rect x="12.2" y="34.4" width="6.2" height="4.2" rx="1"/>
<circle cx="25.9" cy="32.2" r="2"/><rect x="22.8" y="34.4" width="6.2" height="4.2" rx="1"/>
<circle cx="36.5" cy="32.2" r="2"/><rect x="33.4" y="34.4" width="6.2" height="4.2" rx="1"/>
</g></g></svg>
<div class="tx" style="left:57.40px;top:830px;font-size:12.8px;line-height:12.8px;color:#fff;transform:scaleX(0.9743);transform-origin:0 0;-webkit-text-stroke:0.35px #fff">Manage Roles</div>
<div class="si" style="top:862px;background:#2d2a27"></div>
<svg class="a" style="left:7px;top:862px" width="50" height="50" viewBox="0 0 50 50"><path d="M36.70,22.04 L39.73,22.25 L39.73,27.75 L36.70,27.96 L35.63,30.55 L37.62,32.83 L33.73,36.72 L31.45,34.73 L28.86,35.80 L28.65,38.83 L23.15,38.83 L22.94,35.80 L20.35,34.73 L18.07,36.72 L14.18,32.83 L16.17,30.55 L15.10,27.96 L12.07,27.75 L12.07,22.25 L15.10,22.04 L16.17,19.45 L14.18,17.17 L18.07,13.28 L20.35,15.27 L22.94,14.20 L23.15,11.17 L28.65,11.17 L28.86,14.20 L31.45,15.27 L33.73,13.28 L37.62,17.17 L35.63,19.45 Z" fill="#fff" stroke="#fff" stroke-width=".6" stroke-linejoin="round"/><circle cx="25.9" cy="25" r="8.9" fill="#2d2a27"/>
<circle cx="25.9" cy="23.5" r="3.4" fill="#fff"/>
<path d="M20.5,29.2 Q22,26.8 25.9,26.8 Q29.8,26.8 31.3,29.2 Q29,31.8 25.9,31.8 Q22.8,31.8 20.5,29.2 Z" fill="#fff"/></svg>
<div class="tx" style="left:57.37px;top:882px;font-size:12.8px;line-height:12.8px;color:#fff;transform:scaleX(1.0086);transform-origin:0 0;-webkit-text-stroke:0.35px #fff">Membership Settings</div>
<div class="si" style="top:914px;background:#2d2a27"></div>
<svg class="a" style="left:7px;top:914px" width="50" height="50" viewBox="0 0 50 50"><circle cx="25.9" cy="25" r="12.7" fill="none" stroke="#fff" stroke-width="3"/>
<path d="M25.9,17 V25 H34.2" fill="none" stroke="#fff" stroke-width="2.6" stroke-linecap="round" stroke-linejoin="round"/>
<circle cx="25.9" cy="25" r="2.2" fill="#fff"/></svg>
<div class="tx" style="left:57.39px;top:934px;font-size:12.8px;line-height:12.8px;color:#fff;transform:scaleX(0.9883);transform-origin:0 0;-webkit-text-stroke:0.35px #fff">Payroll Center</div>
<div class="si" style="top:966px;background:#2d2a27"></div>
<div class="a" style="left:208px;top:178px;width:7px;height:450px;background:#acacac;border-radius:3.5px"></div>
<div class="a" style="left:219px;top:177px;width:2px;height:803px;background:#adadad"></div>
<div class="a" style="left:224px;top:177px;width:1px;height:803px;background:#b4b4b4"></div>
<div class="tx" style="left:235.13px;top:190px;font-size:15.4px;line-height:15.4px;color:#222;font-weight:bold;transform:scaleX(0.9307);transform-origin:0 0;">COURSE USER INFORMATION</div>
<div class="a" style="left:225px;top:217px;width:1694px;height:1px;background:#2a2a2a"></div>
<div class="a" style="left:225px;top:258px;width:1694px;height:1px;background:#ababab"></div>
<svg class="a" style="left:225px;top:218px" width="40" height="40" viewBox="0 0 40 40">
<path d="M12.6,17.6 V25 Q12.6,26.9 14.5,26.9 H22.6" fill="none" stroke="#111" stroke-width="1.9"/>
<path d="M15.6,15 H24.8 Q26.7,15 26.7,16.9 V23.6" fill="none" stroke="#111" stroke-width="1.9"/>
<polygon points="10.2,18.6 12.6,14.2 15,18.6" fill="#111"/>
<polygon points="24.2,22.6 29.2,22.6 26.7,27.2" fill="#111"/>
</svg>
<div class="a" style="left:1815px;top:223px;width:100px;height:30px;background:#2d2a27;border-radius:3px"></div>
<div class="tx" style="left:1826.90px;top:233px;font-size:12.6px;line-height:12.6px;color:#fff;transform:scaleX(0.9386);transform-origin:0 0;">Add New User</div>
<div class="a" style="left:227px;top:259px;width:4px;height:679px;background:#f3f3f3"></div>
<div class="hl" style="left:226px;top:288px;width:1677px;background:#d0d0d0"></div>
<div class="hl" style="left:226px;top:320px;width:1677px"></div>
<div class="hl" style="left:226px;top:352px;width:1677px"></div>
<div class="hl" style="left:226px;top:384px;width:1677px"></div>
<div class="hl" style="left:226px;top:416px;width:1677px"></div>
<div class="hl" style="left:226px;top:448px;width:1677px"></div>
<div class="hl" style="left:226px;top:480px;width:1677px"></div>
<div class="hl" style="left:226px;top:512px;width:1677px"></div>
<div class="hl" style="left:226px;top:544px;width:1677px"></div>
<div class="hl" style="left:226px;top:576px;width:1677px"></div>
<div class="hl" style="left:226px;top:608px;width:1677px"></div>
<div class="hl" style="left:226px;top:640px;width:1677px"></div>
<div class="hl" style="left:226px;top:672px;width:1677px"></div>
<div class="hl" style="left:226px;top:704px;width:1677px"></div>
<div class="hl" style="left:226px;top:736px;width:1677px"></div>
<div class="hl" style="left:226px;top:768px;width:1677px"></div>
<div class="hl" style="left:226px;top:800px;width:1677px"></div>
<div class="hl" style="left:226px;top:832px;width:1677px"></div>
<div class="hl" style="left:226px;top:864px;width:1677px"></div>
<div class="hl" style="left:226px;top:896px;width:1677px"></div>
<div class="hl" style="left:226px;top:928px;width:1677px"></div>
<div class="vl" style="left:405px;top:259px;height:679px"></div>
<div class="vl" style="left:585px;top:259px;height:679px"></div>
<div class="vl" style="left:764px;top:259px;height:679px"></div>
<div class="vl" style="left:944px;top:259px;height:679px"></div>
<div class="vl" style="left:1123px;top:259px;height:679px"></div>
<div class="vl" style="left:1303px;top:259px;height:679px"></div>
<div class="vl" style="left:1482px;top:259px;height:679px"></div>
<div class="vl" style="left:1662px;top:259px;height:679px"></div>
<div class="vl" style="left:1841px;top:259px;height:679px"></div>
<div class="vl" style="left:1903px;top:259px;height:679px"></div>
<div class="a" style="left:226px;top:259px;width:1px;height:679px;background:#1a7bd0"></div>
<div class="tx" style="left:231.79px;top:269px;font-size:11px;line-height:11px;color:#111;font-weight:bold;transform:scaleX(0.9176);transform-origin:0 0;">USER NAME</div>
<div class="tx" style="left:411.04px;top:269px;font-size:11px;line-height:11px;color:#111;font-weight:bold;transform:scaleX(0.9197);transform-origin:0 0;">FIRST NAME</div>
<div class="tx" style="left:590.44px;top:269px;font-size:11px;line-height:11px;color:#111;font-weight:bold;transform:scaleX(0.9170);transform-origin:0 0;">LAST NAME</div>
<div class="tx" style="left:770.11px;top:269px;font-size:11px;line-height:11px;color:#111;font-weight:bold;transform:scaleX(0.9581);transform-origin:0 0;">EMAIL ID</div>
<div class="tx" style="left:949.80px;top:269px;font-size:11px;line-height:11px;color:#111;font-weight:bold;transform:scaleX(0.9042);transform-origin:0 0;">USER TYPE</div>
<div class="tx" style="left:1129.70px;top:269px;font-size:11px;line-height:11px;color:#111;font-weight:bold;transform:scaleX(0.8394);transform-origin:0 0;">ROLE</div>
<div class="tx" style="left:1309.00px;top:269px;font-size:11px;line-height:11px;color:#111;font-weight:bold;transform:scaleX(0.9073);transform-origin:0 0;">COURSE NAME</div>
<div class="tx" style="left:1488.67px;top:269px;font-size:11px;line-height:11px;color:#111;font-weight:bold;transform:scaleX(0.8838);transform-origin:0 0;">LAST LOGIN</div>
<div class="tx" style="left:1668.56px;top:269px;font-size:11px;line-height:11px;color:#111;font-weight:bold;transform:scaleX(0.8826);transform-origin:0 0;">ACTIVE</div>
<div class="tx" style="left:1847.64px;top:269px;font-size:11px;line-height:11px;color:#111;font-weight:bold;transform:scaleX(0.9407);transform-origin:0 0;">ACTION</div>
<div class="tx" style="left:231.15px;top:299px;font-size:13.1px;line-height:13.1px;color:#111;transform:scaleX(1.0550);transform-origin:0 0;">eurrehman</div>
<div class="tx" style="left:410.15px;top:299px;font-size:13.1px;line-height:13.1px;color:#111;transform:scaleX(1.0000);transform-origin:0 0;">Ebad</div>
<div class="tx" style="left:589.66px;top:299px;font-size:13.1px;line-height:13.1px;color:#111;transform:scaleX(1.0550);transform-origin:0 0;">Ur Rehman</div>
<div class="tx" style="left:769.65px;top:299px;font-size:13.1px;line-height:13.1px;color:#111;transform:scaleX(1.0550);transform-origin:0 0;">ebad@synergy.com</div>
<div class="tx" style="left:949.08px;top:299px;font-size:13.1px;line-height:13.1px;color:#111;transform:scaleX(1.0550);transform-origin:0 0;">Super Administrator</div>
<div class="tx" style="left:1128.58px;top:299px;font-size:13.1px;line-height:13.1px;color:#111;transform:scaleX(1.0550);transform-origin:0 0;">Super Admin</div>
<div class="tx" style="left:1307.59px;top:299px;font-size:13.1px;line-height:13.1px;color:#111;transform:scaleX(1.0550);transform-origin:0 0;">Bushwood Golf Club</div>
<div class="tx" style="left:1487.51px;top:299px;font-size:13.1px;line-height:13.1px;color:#111;transform:scaleX(1.0550);transform-origin:0 0;">2025-09-03 08:01 AM</div>
<div class="tx" style="left:1667.46px;top:299px;font-size:13.1px;line-height:13.1px;color:#111;transform:scaleX(0.9300);transform-origin:0 0;">Yes</div>
<svg class="a" style="left:1869px;top:297px" width="10" height="16" viewBox="0 0 10 16"><g fill="#222"><circle cx="5" cy="2.8" r="1.3"/><circle cx="5" cy="7.6" r="1.3"/><circle cx="5" cy="12.4" r="1.3"/></g></svg>
<div class="tx" style="left:231.01px;top:331px;font-size:13.1px;line-height:13.1px;color:#111;transform:scaleX(1.0550);transform-origin:0 0;">ColinBrigmann</div>
<div class="tx" style="left:410.51px;top:331px;font-size:13.1px;line-height:13.1px;color:#111;transform:scaleX(1.0550);transform-origin:0 0;">Colin</div>
<div class="tx" style="left:589.59px;top:331px;font-size:13.1px;line-height:13.1px;color:#111;transform:scaleX(1.0550);transform-origin:0 0;">Brigmann</div>
<div class="tx" style="left:769.65px;top:331px;font-size:13.1px;line-height:13.1px;color:#111;transform:scaleX(1.0550);transform-origin:0 0;">colin@x.com</div>
<div class="tx" style="left:949.70px;top:331px;font-size:13.1px;line-height:13.1px;color:#111;transform:scaleX(1.0550);transform-origin:0 0;">Administrator</div>
<div class="tx" style="left:1129.20px;top:331px;font-size:13.1px;line-height:13.1px;color:#111;transform:scaleX(1.0550);transform-origin:0 0;">All Access</div>
<div class="tx" style="left:1307.59px;top:331px;font-size:13.1px;line-height:13.1px;color:#111;transform:scaleX(1.0550);transform-origin:0 0;">Bushwood Golf Club</div>
<div class="tx" style="left:1487.51px;top:331px;font-size:13.1px;line-height:13.1px;color:#111;transform:scaleX(1.0550);transform-origin:0 0;">2025-08-29 10:48 AM</div>
<div class="tx" style="left:1667.46px;top:331px;font-size:13.1px;line-height:13.1px;color:#111;transform:scaleX(0.9300);transform-origin:0 0;">Yes</div>
<svg class="a" style="left:1869px;top:329px" width="10" height="16" viewBox="0 0 10 16"><g fill="#222"><circle cx="5" cy="2.8" r="1.3"/><circle cx="5" cy="7.6" r="1.3"/><circle cx="5" cy="12.4" r="1.3"/></g></svg>
<div class="tx" style="left:231.49px;top:363px;font-size:13.1px;line-height:13.1px;color:#111;transform:scaleX(1.0550);transform-origin:0 0;">tyoung</div>
<div class="tx" style="left:410.92px;top:363px;font-size:13.1px;line-height:13.1px;color:#111;transform:scaleX(1.0550);transform-origin:0 0;">Travis</div>
<div class="tx" style="left:590.42px;top:363px;font-size:13.1px;line-height:13.1px;color:#111;transform:scaleX(1.0550);transform-origin:0 0;">Young</div>
<div class="tx" style="left:769.99px;top:363px;font-size:13.1px;line-height:13.1px;color:#111;transform:scaleX(1.0550);transform-origin:0 0;">t@x.com</div>
<div class="tx" style="left:949.70px;top:363px;font-size:13.1px;line-height:13.1px;color:#111;transform:scaleX(1.0550);transform-origin:0 0;">Administrator</div>
<div class="tx" style="left:1129.20px;top:363px;font-size:13.1px;line-height:13.1px;color:#111;transform:scaleX(1.0550);transform-origin:0 0;">All Access</div>
<div class="tx" style="left:1307.59px;top:363px;font-size:13.1px;line-height:13.1px;color:#111;transform:scaleX(1.0550);transform-origin:0 0;">Bushwood Golf Club</div>
<div class="tx" style="left:1487.51px;top:363px;font-size:13.1px;line-height:13.1px;color:#111;transform:scaleX(1.0550);transform-origin:0 0;">2025-09-30 11:31 AM</div>
<div class="tx" style="left:1667.46px;top:363px;font-size:13.1px;line-height:13.1px;color:#111;transform:scaleX(0.9300);transform-origin:0 0;">Yes</div>
<svg class="a" style="left:1869px;top:361px" width="10" height="16" viewBox="0 0 10 16"><g fill="#222"><circle cx="5" cy="2.8" r="1.3"/><circle cx="5" cy="7.6" r="1.3"/><circle cx="5" cy="12.4" r="1.3"/></g></svg>
<div class="tx" style="left:231.49px;top:395px;font-size:13.1px;line-height:13.1px;color:#111;transform:scaleX(1.0550);transform-origin:0 0;">tejas</div>
<div class="tx" style="left:410.96px;top:395px;font-size:13.1px;line-height:13.1px;color:#111;transform:scaleX(0.9300);transform-origin:0 0;">TJ</div>
<div class="tx" style="left:590.42px;top:395px;font-size:13.1px;line-height:13.1px;color:#111;transform:scaleX(1.0550);transform-origin:0 0;">Tejas</div>
<div class="tx" style="left:769.99px;top:395px;font-size:13.1px;line-height:13.1px;color:#111;transform:scaleX(1.0550);transform-origin:0 0;">t@x.com</div>
<div class="tx" style="left:949.70px;top:395px;font-size:13.1px;line-height:13.1px;color:#111;transform:scaleX(1.0550);transform-origin:0 0;">Administrator</div>
<div class="tx" style="left:1129.20px;top:395px;font-size:13.1px;line-height:13.1px;color:#111;transform:scaleX(1.0550);transform-origin:0 0;">All Access</div>
<div class="tx" style="left:1307.59px;top:395px;font-size:13.1px;line-height:13.1px;color:#111;transform:scaleX(1.0550);transform-origin:0 0;">Bushwood Golf Club</div>
<div class="tx" style="left:1487.51px;top:395px;font-size:13.1px;line-height:13.1px;color:#111;transform:scaleX(1.0550);transform-origin:0 0;">2025-10-01 08:09 AM</div>
<div class="tx" style="left:1667.46px;top:395px;font-size:13.1px;line-height:13.1px;color:#111;transform:scaleX(0.9300);transform-origin:0 0;">Yes</div>
<svg class="a" style="left:1869px;top:393px" width="10" height="16" viewBox="0 0 10 16"><g fill="#222"><circle cx="5" cy="2.8" r="1.3"/><circle cx="5" cy="7.6" r="1.3"/><circle cx="5" cy="12.4" r="1.3"/></g></svg>
<div class="tx" style="left:231.15px;top:427px;font-size:13.1px;line-height:13.1px;color:#111;transform:scaleX(1.0550);transform-origin:0 0;">derekd</div>
<div class="tx" style="left:410.09px;top:427px;font-size:13.1px;line-height:13.1px;color:#111;transform:scaleX(1.0550);transform-origin:0 0;">Derek</div>
<div class="tx" style="left:589.73px;top:427px;font-size:13.1px;line-height:13.1px;color:#111;transform:scaleX(0.9300);transform-origin:0 0;">D</div>
<div class="tx" style="left:769.65px;top:427px;font-size:13.1px;line-height:13.1px;color:#111;transform:scaleX(1.0550);transform-origin:0 0;">d@x.com</div>
<div class="tx" style="left:949.70px;top:427px;font-size:13.1px;line-height:13.1px;color:#111;transform:scaleX(1.0550);transform-origin:0 0;">Administrator</div>
<div class="tx" style="left:1129.20px;top:427px;font-size:13.1px;line-height:13.1px;color:#111;transform:scaleX(1.0550);transform-origin:0 0;">All Access</div>
<div class="tx" style="left:1307.59px;top:427px;font-size:13.1px;line-height:13.1px;color:#111;transform:scaleX(1.0550);transform-origin:0 0;">Bushwood Golf Club</div>
<div class="tx" style="left:1487.51px;top:427px;font-size:13.1px;line-height:13.1px;color:#111;transform:scaleX(1.0550);transform-origin:0 0;">2025-07-23 08:57 AM</div>
<div class="tx" style="left:1667.46px;top:427px;font-size:13.1px;line-height:13.1px;color:#111;transform:scaleX(0.9300);transform-origin:0 0;">Yes</div>
<svg class="a" style="left:1869px;top:425px" width="10" height="16" viewBox="0 0 10 16"><g fill="#222"><circle cx="5" cy="2.8" r="1.3"/><circle cx="5" cy="7.6" r="1.3"/><circle cx="5" cy="12.4" r="1.3"/></g></svg>
<div class="tx" style="left:230.80px;top:459px;font-size:13.1px;line-height:13.1px;color:#111;transform:scaleX(1.0550);transform-origin:0 0;">molly</div>
<div class="tx" style="left:410.09px;top:459px;font-size:13.1px;line-height:13.1px;color:#111;transform:scaleX(1.0550);transform-origin:0 0;">Molly</div>
<div class="tx" style="left:589.73px;top:459px;font-size:13.1px;line-height:13.1px;color:#111;transform:scaleX(0.9300);transform-origin:0 0;">M</div>
<div class="tx" style="left:769.30px;top:459px;font-size:13.1px;line-height:13.1px;color:#111;transform:scaleX(1.0550);transform-origin:0 0;">m@x.com</div>
<div class="tx" style="left:949.70px;top:459px;font-size:13.1px;line-height:13.1px;color:#111;transform:scaleX(1.0550);transform-origin:0 0;">Administrator</div>
<div class="tx" style="left:1129.20px;top:459px;font-size:13.1px;line-height:13.1px;color:#111;transform:scaleX(1.0550);transform-origin:0 0;">All Access</div>
<div class="tx" style="left:1307.59px;top:459px;font-size:13.1px;line-height:13.1px;color:#111;transform:scaleX(1.0550);transform-origin:0 0;">Bushwood Golf Club</div>
<div class="tx" style="left:1487.51px;top:459px;font-size:13.1px;line-height:13.1px;color:#111;transform:scaleX(1.0550);transform-origin:0 0;">2025-07-23 09:33 AM</div>
<div class="tx" style="left:1667.46px;top:459px;font-size:13.1px;line-height:13.1px;color:#111;transform:scaleX(0.9300);transform-origin:0 0;">Yes</div>
<svg class="a" style="left:1869px;top:457px" width="10" height="16" viewBox="0 0 10 16"><g fill="#222"><circle cx="5" cy="2.8" r="1.3"/><circle cx="5" cy="7.6" r="1.3"/><circle cx="5" cy="12.4" r="1.3"/></g></svg>
<div class="tx" style="left:231.70px;top:491px;font-size:13.1px;line-height:13.1px;color:#111;transform:scaleX(1.0550);transform-origin:0 0;">AdamG</div>
<div class="tx" style="left:411.20px;top:491px;font-size:13.1px;line-height:13.1px;color:#111;transform:scaleX(1.0000);transform-origin:0 0;">Adam</div>
<div class="tx" style="left:590.09px;top:491px;font-size:13.1px;line-height:13.1px;color:#111;transform:scaleX(0.9300);transform-origin:0 0;">G</div>
<div class="tx" style="left:769.65px;top:491px;font-size:13.1px;line-height:13.1px;color:#111;transform:scaleX(1.0550);transform-origin:0 0;">a@x.com</div>
<div class="tx" style="left:949.70px;top:491px;font-size:13.1px;line-height:13.1px;color:#111;transform:scaleX(1.0550);transform-origin:0 0;">Administrator</div>
<div class="tx" style="left:1129.20px;top:491px;font-size:13.1px;line-height:13.1px;color:#111;transform:scaleX(1.0550);transform-origin:0 0;">All Access</div>
<div class="tx" style="left:1307.59px;top:491px;font-size:13.1px;line-height:13.1px;color:#111;transform:scaleX(1.0550);transform-origin:0 0;">Bushwood Golf Club</div>
<div class="tx" style="left:1667.46px;top:491px;font-size:13.1px;line-height:13.1px;color:#111;transform:scaleX(0.9300);transform-origin:0 0;">Yes</div>
<svg class="a" style="left:1869px;top:489px" width="10" height="16" viewBox="0 0 10 16"><g fill="#222"><circle cx="5" cy="2.8" r="1.3"/><circle cx="5" cy="7.6" r="1.3"/><circle cx="5" cy="12.4" r="1.3"/></g></svg>
<div class="tx" style="left:230.80px;top:523px;font-size:13.1px;line-height:13.1px;color:#111;transform:scaleX(1.0550);transform-origin:0 0;">noteefy</div>
<div class="tx" style="left:410.09px;top:523px;font-size:13.1px;line-height:13.1px;color:#111;transform:scaleX(1.0550);transform-origin:0 0;">Noteefy</div>
<div class="tx" style="left:589.73px;top:523px;font-size:13.1px;line-height:13.1px;color:#111;transform:scaleX(0.9300);transform-origin:0 0;">N</div>
<div class="tx" style="left:769.30px;top:523px;font-size:13.1px;line-height:13.1px;color:#111;transform:scaleX(1.0550);transform-origin:0 0;">n@x.com</div>
<div class="tx" style="left:949.70px;top:523px;font-size:13.1px;line-height:13.1px;color:#111;transform:scaleX(1.0550);transform-origin:0 0;">Administrator</div>
<div class="tx" style="left:1129.20px;top:523px;font-size:13.1px;line-height:13.1px;color:#111;transform:scaleX(1.0550);transform-origin:0 0;">All Access</div>
<div class="tx" style="left:1307.59px;top:523px;font-size:13.1px;line-height:13.1px;color:#111;transform:scaleX(1.0550);transform-origin:0 0;">Bushwood Golf Club</div>
<div class="tx" style="left:1667.46px;top:523px;font-size:13.1px;line-height:13.1px;color:#111;transform:scaleX(0.9300);transform-origin:0 0;">Yes</div>
<svg class="a" style="left:1869px;top:521px" width="10" height="16" viewBox="0 0 10 16"><g fill="#222"><circle cx="5" cy="2.8" r="1.3"/><circle cx="5" cy="7.6" r="1.3"/><circle cx="5" cy="12.4" r="1.3"/></g></svg>
<div class="tx" style="left:231.01px;top:555px;font-size:13.1px;line-height:13.1px;color:#111;transform:scaleX(1.0550);transform-origin:0 0;">ClubMinder</div>
<div class="tx" style="left:410.55px;top:555px;font-size:13.1px;line-height:13.1px;color:#111;transform:scaleX(1.0000);transform-origin:0 0;">Club</div>
<div class="tx" style="left:589.59px;top:555px;font-size:13.1px;line-height:13.1px;color:#111;transform:scaleX(1.0550);transform-origin:0 0;">Minder</div>
<div class="tx" style="left:769.65px;top:555px;font-size:13.1px;line-height:13.1px;color:#111;transform:scaleX(1.0550);transform-origin:0 0;">c@x.com</div>
<div class="tx" style="left:949.70px;top:555px;font-size:13.1px;line-height:13.1px;color:#111;transform:scaleX(1.0550);transform-origin:0 0;">Administrator</div>
<div class="tx" style="left:1129.20px;top:555px;font-size:13.1px;line-height:13.1px;color:#111;transform:scaleX(1.0550);transform-origin:0 0;">All Access</div>
<div class="tx" style="left:1307.59px;top:555px;font-size:13.1px;line-height:13.1px;color:#111;transform:scaleX(1.0550);transform-origin:0 0;">Bushwood Golf Club</div>
<div class="tx" style="left:1487.51px;top:555px;font-size:13.1px;line-height:13.1px;color:#111;transform:scaleX(1.0550);transform-origin:0 0;">2025-03-31 05:13 AM</div>
<div class="tx" style="left:1667.46px;top:555px;font-size:13.1px;line-height:13.1px;color:#111;transform:scaleX(0.9300);transform-origin:0 0;">Yes</div>
<svg class="a" style="left:1869px;top:553px" width="10" height="16" viewBox="0 0 10 16"><g fill="#222"><circle cx="5" cy="2.8" r="1.3"/><circle cx="5" cy="7.6" r="1.3"/><circle cx="5" cy="12.4" r="1.3"/></g></svg>
<div class="tx" style="left:230.59px;top:587px;font-size:13.1px;line-height:13.1px;color:#111;transform:scaleX(1.0550);transform-origin:0 0;">MichaelS</div>
<div class="tx" style="left:410.09px;top:587px;font-size:13.1px;line-height:13.1px;color:#111;transform:scaleX(1.0550);transform-origin:0 0;">Michael</div>
<div class="tx" style="left:590.15px;top:587px;font-size:13.1px;line-height:13.1px;color:#111;transform:scaleX(0.9300);transform-origin:0 0;">S</div>
<div class="tx" style="left:769.30px;top:587px;font-size:13.1px;line-height:13.1px;color:#111;transform:scaleX(1.0550);transform-origin:0 0;">m@x.com</div>
<div class="tx" style="left:949.70px;top:587px;font-size:13.1px;line-height:13.1px;color:#111;transform:scaleX(1.0550);transform-origin:0 0;">Administrator</div>
<div class="tx" style="left:1129.20px;top:587px;font-size:13.1px;line-height:13.1px;color:#111;transform:scaleX(1.0550);transform-origin:0 0;">All Access</div>
<div class="tx" style="left:1307.59px;top:587px;font-size:13.1px;line-height:13.1px;color:#111;transform:scaleX(1.0550);transform-origin:0 0;">Bushwood Golf Club</div>
<div class="tx" style="left:1487.51px;top:587px;font-size:13.1px;line-height:13.1px;color:#111;transform:scaleX(1.0550);transform-origin:0 0;">2025-10-01 10:13 AM</div>
<div class="tx" style="left:1667.46px;top:587px;font-size:13.1px;line-height:13.1px;color:#111;transform:scaleX(0.9300);transform-origin:0 0;">Yes</div>
<svg class="a" style="left:1869px;top:585px" width="10" height="16" viewBox="0 0 10 16"><g fill="#222"><circle cx="5" cy="2.8" r="1.3"/><circle cx="5" cy="7.6" r="1.3"/><circle cx="5" cy="12.4" r="1.3"/></g></svg>
<div class="tx" style="left:231.15px;top:619px;font-size:13.1px;line-height:13.1px;color:#111;transform:scaleX(1.0550);transform-origin:0 0;">dmelvin</div>
<div class="tx" style="left:410.09px;top:619px;font-size:13.1px;line-height:13.1px;color:#111;transform:scaleX(1.0550);transform-origin:0 0;">Dayna</div>
<div class="tx" style="left:589.59px;top:619px;font-size:13.1px;line-height:13.1px;color:#111;transform:scaleX(1.0550);transform-origin:0 0;">Melvin</div>
<div class="tx" style="left:769.65px;top:619px;font-size:13.1px;line-height:13.1px;color:#111;transform:scaleX(1.0550);transform-origin:0 0;">d@x.com</div>
<div class="tx" style="left:949.70px;top:619px;font-size:13.1px;line-height:13.1px;color:#111;transform:scaleX(1.0550);transform-origin:0 0;">Administrator</div>
<div class="tx" style="left:1129.20px;top:619px;font-size:13.1px;line-height:13.1px;color:#111;transform:scaleX(1.0550);transform-origin:0 0;">All Access</div>
<div class="tx" style="left:1307.59px;top:619px;font-size:13.1px;line-height:13.1px;color:#111;transform:scaleX(1.0550);transform-origin:0 0;">Bushwood Golf Club</div>
<div class="tx" style="left:1487.51px;top:619px;font-size:13.1px;line-height:13.1px;color:#111;transform:scaleX(1.0550);transform-origin:0 0;">2024-12-27 12:11 PM</div>
<div class="tx" style="left:1667.46px;top:619px;font-size:13.1px;line-height:13.1px;color:#111;transform:scaleX(0.9300);transform-origin:0 0;">Yes</div>
<svg class="a" style="left:1869px;top:617px" width="10" height="16" viewBox="0 0 10 16"><g fill="#222"><circle cx="5" cy="2.8" r="1.3"/><circle cx="5" cy="7.6" r="1.3"/><circle cx="5" cy="12.4" r="1.3"/></g></svg>
<div class="tx" style="left:231.49px;top:651px;font-size:13.1px;line-height:13.1px;color:#111;transform:scaleX(1.0550);transform-origin:0 0;">Jordan</div>
<div class="tx" style="left:410.99px;top:651px;font-size:13.1px;line-height:13.1px;color:#111;transform:scaleX(1.0550);transform-origin:0 0;">Jordan</div>
<div class="tx" style="left:590.52px;top:651px;font-size:13.1px;line-height:13.1px;color:#111;transform:scaleX(0.9300);transform-origin:0 0;">J</div>
<div class="tx" style="left:770.55px;top:651px;font-size:13.1px;line-height:13.1px;color:#111;transform:scaleX(1.0550);transform-origin:0 0;">j@x.com</div>
<div class="tx" style="left:949.70px;top:651px;font-size:13.1px;line-height:13.1px;color:#111;transform:scaleX(1.0550);transform-origin:0 0;">Administrator</div>
<div class="tx" style="left:1129.20px;top:651px;font-size:13.1px;line-height:13.1px;color:#111;transform:scaleX(1.0550);transform-origin:0 0;">All Access</div>
<div class="tx" style="left:1307.59px;top:651px;font-size:13.1px;line-height:13.1px;color:#111;transform:scaleX(1.0550);transform-origin:0 0;">Bushwood Golf Club</div>
<div class="tx" style="left:1487.51px;top:651px;font-size:13.1px;line-height:13.1px;color:#111;transform:scaleX(1.0550);transform-origin:0 0;">2025-09-30 12:19 PM</div>
<div class="tx" style="left:1667.46px;top:651px;font-size:13.1px;line-height:13.1px;color:#111;transform:scaleX(0.9300);transform-origin:0 0;">Yes</div>
<svg class="a" style="left:1869px;top:649px" width="10" height="16" viewBox="0 0 10 16"><g fill="#222"><circle cx="5" cy="2.8" r="1.3"/><circle cx="5" cy="7.6" r="1.3"/><circle cx="5" cy="12.4" r="1.3"/></g></svg>
<div class="tx" style="left:231.15px;top:683px;font-size:13.1px;line-height:13.1px;color:#111;transform:scaleX(1.0550);transform-origin:0 0;">allendaletest</div>
<div class="tx" style="left:411.20px;top:683px;font-size:13.1px;line-height:13.1px;color:#111;transform:scaleX(1.0550);transform-origin:0 0;">Allendale</div>
<div class="tx" style="left:590.44px;top:683px;font-size:13.1px;line-height:13.1px;color:#111;transform:scaleX(1.0000);transform-origin:0 0;">Test</div>
<div class="tx" style="left:769.65px;top:683px;font-size:13.1px;line-height:13.1px;color:#111;transform:scaleX(1.0550);transform-origin:0 0;">allendalecountryclub@gmai</div>
<div class="tx" style="left:949.70px;top:683px;font-size:13.1px;line-height:13.1px;color:#111;transform:scaleX(1.0550);transform-origin:0 0;">Administrator</div>
<div class="tx" style="left:1128.09px;top:683px;font-size:13.1px;line-height:13.1px;color:#111;transform:scaleX(1.0550);transform-origin:0 0;">ProShop</div>
<div class="tx" style="left:1307.59px;top:683px;font-size:13.1px;line-height:13.1px;color:#111;transform:scaleX(1.0550);transform-origin:0 0;">Bushwood Golf Club</div>
<div class="tx" style="left:1487.51px;top:683px;font-size:13.1px;line-height:13.1px;color:#111;transform:scaleX(1.0550);transform-origin:0 0;">2024-11-15 08:10 AM</div>
<div class="tx" style="left:1666.73px;top:683px;font-size:13.1px;line-height:13.1px;color:#111;transform:scaleX(0.9300);transform-origin:0 0;">No</div>
<svg class="a" style="left:1869px;top:681px" width="10" height="16" viewBox="0 0 10 16"><g fill="#222"><circle cx="5" cy="2.8" r="1.3"/><circle cx="5" cy="7.6" r="1.3"/><circle cx="5" cy="12.4" r="1.3"/></g></svg>
<div class="tx" style="left:230.80px;top:715px;font-size:13.1px;line-height:13.1px;color:#111;transform:scaleX(1.0550);transform-origin:0 0;">indiasupport</div>
<div class="tx" style="left:410.41px;top:715px;font-size:13.1px;line-height:13.1px;color:#111;transform:scaleX(0.9300);transform-origin:0 0;">na</div>
<div class="tx" style="left:589.91px;top:715px;font-size:13.1px;line-height:13.1px;color:#111;transform:scaleX(0.9300);transform-origin:0 0;">na</div>
<div class="tx" style="left:769.41px;top:715px;font-size:13.1px;line-height:13.1px;color:#111;transform:scaleX(0.9300);transform-origin:0 0;">na</div>
<div class="tx" style="left:949.70px;top:715px;font-size:13.1px;line-height:13.1px;color:#111;transform:scaleX(1.0550);transform-origin:0 0;">Administrator</div>
<div class="tx" style="left:1128.51px;top:715px;font-size:13.1px;line-height:13.1px;color:#111;transform:scaleX(1.0550);transform-origin:0 0;">6/30 Test</div>
<div class="tx" style="left:1307.59px;top:715px;font-size:13.1px;line-height:13.1px;color:#111;transform:scaleX(1.0550);transform-origin:0 0;">Bushwood Golf Club</div>
<div class="tx" style="left:1487.51px;top:715px;font-size:13.1px;line-height:13.1px;color:#111;transform:scaleX(1.0550);transform-origin:0 0;">2025-03-20 10:21 AM</div>
<div class="tx" style="left:1667.46px;top:715px;font-size:13.1px;line-height:13.1px;color:#111;transform:scaleX(0.9300);transform-origin:0 0;">Yes</div>
<svg class="a" style="left:1869px;top:713px" width="10" height="16" viewBox="0 0 10 16"><g fill="#222"><circle cx="5" cy="2.8" r="1.3"/><circle cx="5" cy="7.6" r="1.3"/><circle cx="5" cy="12.4" r="1.3"/></g></svg>
<div class="tx" style="left:230.91px;top:747px;font-size:13.1px;line-height:13.1px;color:#111;transform:scaleX(0.9300);transform-origin:0 0;">mas</div>
<div class="tx" style="left:410.23px;top:747px;font-size:13.1px;line-height:13.1px;color:#111;transform:scaleX(0.9300);transform-origin:0 0;">Mas</div>
<div class="tx" style="left:590.70px;top:747px;font-size:13.1px;line-height:13.1px;color:#111;transform:scaleX(1.0550);transform-origin:0 0;">Ansari</div>
<div class="a" style="left:765.5px;top:737px;width:178.5px;height:30px;overflow:hidden"><div class="tx" style="left:3.59px;top:10px;font-size:13.1px;line-height:13.1px;color:#111;transform:scaleX(1.0550);transform-origin:0 0;">Masroor.Ansari@jonasclub.c</div></div>
<div class="tx" style="left:949.70px;top:747px;font-size:13.1px;line-height:13.1px;color:#111;transform:scaleX(1.0550);transform-origin:0 0;">Administrator</div>
<div class="tx" style="left:1129.20px;top:747px;font-size:13.1px;line-height:13.1px;color:#111;transform:scaleX(1.0550);transform-origin:0 0;">All Access</div>
<div class="tx" style="left:1307.59px;top:747px;font-size:13.1px;line-height:13.1px;color:#111;transform:scaleX(1.0550);transform-origin:0 0;">Bushwood Golf Club</div>
<div class="tx" style="left:1487.51px;top:747px;font-size:13.1px;line-height:13.1px;color:#111;transform:scaleX(1.0550);transform-origin:0 0;">2025-09-16 11:05 PM</div>
<div class="tx" style="left:1667.46px;top:747px;font-size:13.1px;line-height:13.1px;color:#111;transform:scaleX(0.9300);transform-origin:0 0;">Yes</div>
<svg class="a" style="left:1869px;top:745px" width="10" height="16" viewBox="0 0 10 16"><g fill="#222"><circle cx="5" cy="2.8" r="1.3"/><circle cx="5" cy="7.6" r="1.3"/><circle cx="5" cy="12.4" r="1.3"/></g></svg>
<div class="tx" style="left:231.15px;top:779px;font-size:13.1px;line-height:13.1px;color:#111;transform:scaleX(1.0550);transform-origin:0 0;">austin</div>
<div class="tx" style="left:411.20px;top:779px;font-size:13.1px;line-height:13.1px;color:#111;transform:scaleX(1.0550);transform-origin:0 0;">Austin</div>
<div class="tx" style="left:590.31px;top:779px;font-size:13.1px;line-height:13.1px;color:#111;transform:scaleX(1.0000);transform-origin:0 0;">Zech</div>
<div class="tx" style="left:769.65px;top:779px;font-size:13.1px;line-height:13.1px;color:#111;transform:scaleX(1.0550);transform-origin:0 0;">austin@clubcaddie.com</div>
<div class="tx" style="left:949.70px;top:779px;font-size:13.1px;line-height:13.1px;color:#111;transform:scaleX(1.0550);transform-origin:0 0;">Administrator</div>
<div class="tx" style="left:1128.58px;top:779px;font-size:13.1px;line-height:13.1px;color:#111;transform:scaleX(1.0550);transform-origin:0 0;">Super Admin</div>
<div class="tx" style="left:1307.59px;top:779px;font-size:13.1px;line-height:13.1px;color:#111;transform:scaleX(1.0550);transform-origin:0 0;">Bushwood Golf Club</div>
<div class="tx" style="left:1487.51px;top:779px;font-size:13.1px;line-height:13.1px;color:#111;transform:scaleX(1.0550);transform-origin:0 0;">2025-07-23 09:07 AM</div>
<div class="tx" style="left:1667.46px;top:779px;font-size:13.1px;line-height:13.1px;color:#111;transform:scaleX(0.9300);transform-origin:0 0;">Yes</div>
<svg class="a" style="left:1869px;top:777px" width="10" height="16" viewBox="0 0 10 16"><g fill="#222"><circle cx="5" cy="2.8" r="1.3"/><circle cx="5" cy="7.6" r="1.3"/><circle cx="5" cy="12.4" r="1.3"/></g></svg>
<div class="tx" style="left:231.56px;top:811px;font-size:13.1px;line-height:13.1px;color:#111;transform:scaleX(1.0550);transform-origin:0 0;">fbtest1</div>
<div class="tx" style="left:410.23px;top:811px;font-size:13.1px;line-height:13.1px;color:#111;transform:scaleX(0.9300);transform-origin:0 0;">FB</div>
<div class="tx" style="left:590.44px;top:811px;font-size:13.1px;line-height:13.1px;color:#111;transform:scaleX(1.0000);transform-origin:0 0;">TEST</div>
<div class="tx" style="left:769.99px;top:811px;font-size:13.1px;line-height:13.1px;color:#111;transform:scaleX(1.0550);transform-origin:0 0;">travis@clubcaddie.com</div>
<div class="tx" style="left:949.70px;top:811px;font-size:13.1px;line-height:13.1px;color:#111;transform:scaleX(1.0550);transform-origin:0 0;">Administrator</div>
<div class="tx" style="left:1128.09px;top:811px;font-size:13.1px;line-height:13.1px;color:#111;transform:scaleX(1.0550);transform-origin:0 0;">F&amp;B</div>
<div class="tx" style="left:1307.59px;top:811px;font-size:13.1px;line-height:13.1px;color:#111;transform:scaleX(1.0550);transform-origin:0 0;">Bushwood Golf Club</div>
<div class="tx" style="left:1487.51px;top:811px;font-size:13.1px;line-height:13.1px;color:#111;transform:scaleX(1.0550);transform-origin:0 0;">2024-08-08 06:58 PM</div>
<div class="tx" style="left:1667.46px;top:811px;font-size:13.1px;line-height:13.1px;color:#111;transform:scaleX(0.9300);transform-origin:0 0;">Yes</div>
<svg class="a" style="left:1869px;top:809px" width="10" height="16" viewBox="0 0 10 16"><g fill="#222"><circle cx="5" cy="2.8" r="1.3"/><circle cx="5" cy="7.6" r="1.3"/><circle cx="5" cy="12.4" r="1.3"/></g></svg>
<div class="tx" style="left:231.15px;top:843px;font-size:13.1px;line-height:13.1px;color:#111;transform:scaleX(1.0550);transform-origin:0 0;">greatlifekc</div>
<div class="tx" style="left:410.59px;top:843px;font-size:13.1px;line-height:13.1px;color:#111;transform:scaleX(0.9300);transform-origin:0 0;">GL</div>
<div class="tx" style="left:589.59px;top:843px;font-size:13.1px;line-height:13.1px;color:#111;transform:scaleX(1.0550);transform-origin:0 0;">Kansas City</div>
<div class="tx" style="left:769.41px;top:843px;font-size:13.1px;line-height:13.1px;color:#111;transform:scaleX(0.9300);transform-origin:0 0;">n/a</div>
<div class="tx" style="left:949.70px;top:843px;font-size:13.1px;line-height:13.1px;color:#111;transform:scaleX(1.0550);transform-origin:0 0;">Administrator</div>
<div class="tx" style="left:1129.20px;top:843px;font-size:13.1px;line-height:13.1px;color:#111;transform:scaleX(1.0550);transform-origin:0 0;">All Access</div>
<div class="tx" style="left:1307.59px;top:843px;font-size:13.1px;line-height:13.1px;color:#111;transform:scaleX(1.0550);transform-origin:0 0;">Bushwood Golf Club</div>
<div class="tx" style="left:1487.51px;top:843px;font-size:13.1px;line-height:13.1px;color:#111;transform:scaleX(1.0550);transform-origin:0 0;">2024-08-12 07:30 AM</div>
<div class="tx" style="left:1667.46px;top:843px;font-size:13.1px;line-height:13.1px;color:#111;transform:scaleX(0.9300);transform-origin:0 0;">Yes</div>
<svg class="a" style="left:1869px;top:841px" width="10" height="16" viewBox="0 0 10 16"><g fill="#222"><circle cx="5" cy="2.8" r="1.3"/><circle cx="5" cy="7.6" r="1.3"/><circle cx="5" cy="12.4" r="1.3"/></g></svg>
<div class="tx" style="left:230.59px;top:875px;font-size:13.1px;line-height:13.1px;color:#111;transform:scaleX(1.0550);transform-origin:0 0;">Proshop2024</div>
<div class="tx" style="left:410.09px;top:875px;font-size:13.1px;line-height:13.1px;color:#111;transform:scaleX(1.0550);transform-origin:0 0;">Proshop</div>
<div class="tx" style="left:589.59px;top:875px;font-size:13.1px;line-height:13.1px;color:#111;transform:scaleX(1.0550);transform-origin:0 0;">Proshop</div>
<div class="tx" style="left:769.37px;top:875px;font-size:13.1px;line-height:13.1px;color:#111;transform:scaleX(1.0550);transform-origin:0 0;">proshop@test.com</div>
<div class="tx" style="left:949.01px;top:875px;font-size:13.1px;line-height:13.1px;color:#111;transform:scaleX(1.0550);transform-origin:0 0;">Course Pro Shop User</div>
<div class="tx" style="left:1128.09px;top:875px;font-size:13.1px;line-height:13.1px;color:#111;transform:scaleX(1.0550);transform-origin:0 0;">ProShop</div>
<div class="tx" style="left:1307.59px;top:875px;font-size:13.1px;line-height:13.1px;color:#111;transform:scaleX(1.0550);transform-origin:0 0;">Bushwood Golf Club</div>
<div class="tx" style="left:1667.46px;top:875px;font-size:13.1px;line-height:13.1px;color:#111;transform:scaleX(0.9300);transform-origin:0 0;">Yes</div>
<svg class="a" style="left:1869px;top:873px" width="10" height="16" viewBox="0 0 10 16"><g fill="#222"><circle cx="5" cy="2.8" r="1.3"/><circle cx="5" cy="7.6" r="1.3"/><circle cx="5" cy="12.4" r="1.3"/></g></svg>
<div class="tx" style="left:230.59px;top:907px;font-size:13.1px;line-height:13.1px;color:#111;transform:scaleX(1.0550);transform-origin:0 0;">Kenzie</div>
<div class="tx" style="left:410.09px;top:907px;font-size:13.1px;line-height:13.1px;color:#111;transform:scaleX(1.0550);transform-origin:0 0;">Mackenzie</div>
<div class="tx" style="left:589.59px;top:907px;font-size:13.1px;line-height:13.1px;color:#111;transform:scaleX(1.0550);transform-origin:0 0;">Lauzier</div>
<div class="tx" style="left:770.55px;top:907px;font-size:13.1px;line-height:13.1px;color:#111;transform:scaleX(1.0550);transform-origin:0 0;">jodi@clubcaddie.com</div>
<div class="tx" style="left:949.01px;top:907px;font-size:13.1px;line-height:13.1px;color:#111;transform:scaleX(1.0550);transform-origin:0 0;">Course Pro Shop User</div>
<div class="tx" style="left:1128.09px;top:907px;font-size:13.1px;line-height:13.1px;color:#111;transform:scaleX(1.0550);transform-origin:0 0;">ProShop</div>
<div class="tx" style="left:1307.59px;top:907px;font-size:13.1px;line-height:13.1px;color:#111;transform:scaleX(1.0550);transform-origin:0 0;">Bushwood Golf Club</div>
<div class="tx" style="left:1487.51px;top:907px;font-size:13.1px;line-height:13.1px;color:#111;transform:scaleX(1.0550);transform-origin:0 0;">2024-06-21 10:23 AM</div>
<div class="tx" style="left:1667.46px;top:907px;font-size:13.1px;line-height:13.1px;color:#111;transform:scaleX(0.9300);transform-origin:0 0;">Yes</div>
<svg class="a" style="left:1869px;top:905px" width="10" height="16" viewBox="0 0 10 16"><g fill="#222"><circle cx="5" cy="2.8" r="1.3"/><circle cx="5" cy="7.6" r="1.3"/><circle cx="5" cy="12.4" r="1.3"/></g></svg>
<div class="a" style="left:226px;top:938px;width:1693px;height:1px;background:#c0c0c0"></div>
<div class="a" style="left:1905px;top:259px;width:14px;height:282px;background:#ababab;border-radius:7px"></div>
<svg class="a" style="left:1770px;top:940px" width="140" height="40" viewBox="1770 940 140 40">
<rect x="1791" y="951" width="10" height="16.4" fill="#1d7245"/>
<g stroke="#fff" stroke-width="0.9"><path d="M1793.5,954.5 H1800 M1793.5,957.6 H1800 M1793.5,960.7 H1800 M1793.5,963.8 H1800 M1796.6,952 V966.4"/></g>
<polygon points="1779.8,951.6 1792,948.8 1792,968.8 1779.8,966.6" fill="#127a40"/>
<path d="M1783,954.6 L1788.6,963.6 M1788.6,954.6 L1783,963.6" stroke="#fff" stroke-width="1.7"/>
<g fill="#111">
<ellipse cx="1836" cy="953" rx="6.8" ry="2.8"/>
<path d="M1829.2,955 Q1836,959.5 1842.8,955 V958.6 Q1836,963 1829.2,958.6 Z"/>
<path d="M1829.2,960.6 Q1836,965 1842.8,960.6 V964.2 Q1836,968.6 1829.2,964.2 Z"/>
<circle cx="1843.5" cy="964.2" r="5.6" stroke="#fff" stroke-width="1"/>
<ellipse cx="1881" cy="953" rx="6.8" ry="2.8"/>
<path d="M1874.2,955 Q1881,959.5 1887.8,955 V958.6 Q1881,963 1874.2,958.6 Z"/>
<path d="M1874.2,960.6 Q1881,965 1887.8,960.6 V964.2 Q1881,968.6 1874.2,964.2 Z"/>
<circle cx="1888.5" cy="964.2" r="5.6" stroke="#fff" stroke-width="1"/>
</g>
<g fill="none" stroke="#fff" stroke-width="1.4" stroke-linecap="round">
<path d="M1843.5,960.8 V967.2 M1841.2,965 L1843.5,967.4 L1845.8,965"/>
<path d="M1888.5,967.6 V961.2 M1886.2,963.4 L1888.5,961 L1890.8,963.4"/>
</g>
</svg>
<svg class="a" style="left:7px;top:966px" width="50" height="13" viewBox="0 0 50 13"><circle cx="25.9" cy="24.5" r="12.7" fill="none" stroke="#fff" stroke-width="3"/></svg>
<div class="a" style="left:0;top:978px;width:1919px;height:1px;background:#a8a8a8"></div>
<div class="a" style="left:0;top:979px;width:1919px;height:1px;background:#2d2a27"></div>
<div class="a" style="left:585px;top:318px;width:750px;height:350px;background:#fff;border:1.4px solid #2a2a2a"></div>
<div class="a" style="left:586px;top:329px;width:748px;height:30px;background:#007043"></div>
<div class="tx" style="left:595.14px;top:338px;font-size:15px;line-height:15px;color:#fff;transform:scaleX(0.9412);transform-origin:0 0;">UPDATE USER</div>
<div class="a" style="left:1304px;top:334px;width:20px;height:20px;background:#d1222d;border-radius:3px"></div>
<svg class="a" style="left:1304px;top:334px" width="20" height="20" viewBox="0 0 20 20"><path d="M4.6,4.6 L15.4,15.4 M15.4,4.6 L4.6,15.4" stroke="#fff" stroke-width="2.1"/></svg>
<div class="tx" style="left:595.09px;top:370px;font-size:13.6px;line-height:13.6px;color:#222;transform:scaleX(1.0174);transform-origin:0 0;">First Name</div>
<div class="tx" style="left:845.61px;top:370px;font-size:13.6px;line-height:13.6px;color:#222;transform:scaleX(1.0043);transform-origin:0 0;">Last Name</div>
<div class="tx" style="left:1095.81px;top:370px;font-size:13.6px;line-height:13.6px;color:#222;transform:scaleX(1.0054);transform-origin:0 0;">Email Address</div>
<div class="tx" style="left:595.47px;top:421px;font-size:13.6px;line-height:13.6px;color:#222;transform:scaleX(1.0092);transform-origin:0 0;">User Name</div>
<div class="tx" style="left:845.84px;top:421px;font-size:13.6px;line-height:13.6px;color:#222;transform:scaleX(0.9775);transform-origin:0 0;">Password</div>
<div class="tx" style="left:1095.91px;top:421px;font-size:13.6px;line-height:13.6px;color:#222;transform:scaleX(1.0081);transform-origin:0 0;">Confirm Password</div>
<div class="tx" style="left:595.38px;top:473px;font-size:13.6px;line-height:13.6px;color:#222;transform:scaleX(1.0304);transform-origin:0 0;">Phone No.</div>
<div class="tx" style="left:845.89px;top:473px;font-size:13.6px;line-height:13.6px;color:#222;transform:scaleX(0.9920);transform-origin:0 0;">User Type</div>
<div class="tx" style="left:1096.30px;top:473px;font-size:13.6px;line-height:13.6px;color:#222;transform:scaleX(0.9764);transform-origin:0 0;">User Role</div>
<div class="tx" style="left:595.29px;top:524px;font-size:13.6px;line-height:13.6px;color:#222;transform:scaleX(0.9890);transform-origin:0 0;">User Status</div>
<div class="tx" style="left:845.52px;top:524px;font-size:13.6px;line-height:13.6px;color:#222;transform:scaleX(0.9939);transform-origin:0 0;">POS Override Pin</div>
<div class="tx" style="left:1095.93px;top:524px;font-size:13.6px;line-height:13.6px;color:#222;transform:scaleX(1.0487);transform-origin:0 0;">Unique Identification Pin</div>
<div class="tx" style="left:595.48px;top:575px;font-size:13.6px;line-height:13.6px;color:#222;transform:scaleX(1.0024);transform-origin:0 0;">User Tab Color</div>
<div class="tx" style="left:845.81px;top:575px;font-size:13.6px;line-height:13.6px;color:#222;transform:scaleX(1.0005);transform-origin:0 0;">External Payroll Employee Id</div>
<div class="inp" style="left:596px;top:385px"></div>
<div class="inp" style="left:846px;top:385px"></div>
<div class="inp" style="left:1097px;top:385px"></div>
<div class="inp" style="left:596px;top:436px"></div>
<div class="inp" style="left:596px;top:487.5px"></div>
<div class="inp" style="left:846px;top:590px"></div>
<div class="inp" style="left:846px;top:436px;border-color:#a9a9a9;border-radius:0"></div>
<div class="inp" style="left:1097px;top:436px;border-color:#a9a9a9;border-radius:0;border-right:none"></div>
<div class="inp" style="left:846px;top:539px;border-color:#a9a9a9;border-radius:0"></div>
<div class="inp" style="left:1097px;top:539px;border-color:#a9a9a9;border-radius:0;border-right:none"></div>
<div class="tx" style="left:603.58px;top:394px;font-size:12px;line-height:12px;color:#222;transform:scaleX(1.0253);transform-origin:0 0;">Colin</div>
<div class="tx" style="left:853.73px;top:394px;font-size:12px;line-height:12px;color:#222;transform:scaleX(1.0145);transform-origin:0 0;">Brigmann</div>
<div class="tx" style="left:1104.42px;top:394px;font-size:12px;line-height:12px;color:#222;transform:scaleX(1.0074);transform-origin:0 0;">colinbrigmann55@gmail.com</div>
<div class="tx" style="left:603.60px;top:445px;font-size:12px;line-height:12px;color:#222;transform:scaleX(1.0052);transform-origin:0 0;">ColinBrigmann</div>
<div class="tx" style="left:603.62px;top:496px;font-size:12px;line-height:12px;color:#222;transform:scaleX(0.9722);transform-origin:0 0;">1231231234</div>
<svg class="a" style="left:0;top:0" width="1919" height="980" viewBox="0 0 1919 980" ><g fill="#111"><circle cx="858.90" cy="450.5" r="2.6"/><circle cx="866.14" cy="450.5" r="2.6"/><circle cx="873.39" cy="450.5" r="2.6"/><circle cx="880.63" cy="450.5" r="2.6"/><circle cx="887.88" cy="450.5" r="2.6"/><circle cx="895.12" cy="450.5" r="2.6"/><circle cx="902.37" cy="450.5" r="2.6"/><circle cx="909.62" cy="450.5" r="2.6"/><circle cx="916.86" cy="450.5" r="2.6"/><circle cx="924.11" cy="450.5" r="2.6"/><circle cx="931.35" cy="450.5" r="2.6"/><circle cx="938.60" cy="450.5" r="2.6"/><circle cx="945.84" cy="450.5" r="2.6"/><circle cx="953.09" cy="450.5" r="2.6"/><circle cx="960.33" cy="450.5" r="2.6"/><circle cx="967.57" cy="450.5" r="2.6"/><circle cx="974.82" cy="450.5" r="2.6"/><circle cx="982.06" cy="450.5" r="2.6"/><circle cx="989.31" cy="450.5" r="2.6"/><circle cx="996.55" cy="450.5" r="2.6"/><circle cx="1003.80" cy="450.5" r="2.6"/><circle cx="1011.04" cy="450.5" r="2.6"/><circle cx="1018.29" cy="450.5" r="2.6"/><circle cx="1025.53" cy="450.5" r="2.6"/></g></svg>
<svg class="a" style="left:0;top:0" width="1919" height="980" viewBox="0 0 1919 980" ><g fill="#111"><circle cx="1109.10" cy="450.5" r="2.6"/><circle cx="1116.34" cy="450.5" r="2.6"/><circle cx="1123.59" cy="450.5" r="2.6"/><circle cx="1130.83" cy="450.5" r="2.6"/><circle cx="1138.08" cy="450.5" r="2.6"/><circle cx="1145.32" cy="450.5" r="2.6"/><circle cx="1152.57" cy="450.5" r="2.6"/><circle cx="1159.81" cy="450.5" r="2.6"/><circle cx="1167.06" cy="450.5" r="2.6"/><circle cx="1174.30" cy="450.5" r="2.6"/><circle cx="1181.55" cy="450.5" r="2.6"/><circle cx="1188.79" cy="450.5" r="2.6"/><circle cx="1196.04" cy="450.5" r="2.6"/><circle cx="1203.28" cy="450.5" r="2.6"/><circle cx="1210.53" cy="450.5" r="2.6"/><circle cx="1217.77" cy="450.5" r="2.6"/><circle cx="1225.02" cy="450.5" r="2.6"/><circle cx="1232.26" cy="450.5" r="2.6"/><circle cx="1239.51" cy="450.5" r="2.6"/><circle cx="1246.75" cy="450.5" r="2.6"/><circle cx="1254.00" cy="450.5" r="2.6"/><circle cx="1261.24" cy="450.5" r="2.6"/><circle cx="1268.49" cy="450.5" r="2.6"/><circle cx="1275.73" cy="450.5" r="2.6"/></g></svg>
<div class="sel" style="left:846.6px;top:487.4px;width:227px"></div>
<div class="tx" style="left:852.80px;top:495px;font-size:12px;line-height:12px;color:#222;transform:scaleX(1.0240);transform-origin:0 0;">Admin</div>
<div class="caret" style="left:1056.6px;top:497.8px"></div>
<div class="sel" style="left:1097px;top:487.6px;width:227px"></div>
<div class="tx" style="left:1103.20px;top:495px;font-size:12px;line-height:12px;color:#222;transform:scaleX(0.9440);transform-origin:0 0;">All Access</div>
<div class="caret" style="left:1307.0px;top:498.0px"></div>
<div class="sel" style="left:596.3px;top:539.4px;width:227.2px"></div>
<div class="tx" style="left:602.50px;top:547px;font-size:12px;line-height:12px;color:#222;transform:scaleX(0.9950);transform-origin:0 0;">Active</div>
<div class="caret" style="left:806.5px;top:549.8px"></div>
<div class="sel" style="left:596.3px;top:590.4px;width:79.2px;height:25.2px"></div>
<div class="a" style="left:609px;top:593px;width:40px;height:20px;background:#4e5f25"></div>
<div class="caret" style="left:664px;top:601px;border-top-color:#888;border-left-width:3.5px;border-right-width:3.5px;border-top-width:4px"></div>
<div class="a" style="left:910px;top:626.2px;width:100px;height:29.5px;background:#2d2a27;border-radius:3px"></div>
<div class="tx" style="left:934.91px;top:635px;font-size:13.3px;line-height:13.3px;color:#fff;transform:scaleX(0.9890);transform-origin:0 0;-webkit-text-stroke:0.45px #fff">SUBMIT</div>
<div class="badge" style="left:1653.0px;top:20.0px"></div>
<svg class="a" style="left:0;top:0" width="1919" height="60" viewBox="0 0 1919 60"><path d="M1673.4,30.2 H1676.6 V50.9 H1673.4 V34.6 L1668.3,36.6 V33.7 Z" fill="#fff"/></svg>
<div class="badge" style="left:151.3px;top:426.0px"></div>
<div class="tx" style="left:162.11px;top:432px;font-size:30px;line-height:30px;color:#fff;transform:scaleX(1.0580);transform-origin:0 0;">2</div>
<div class="badge" style="left:1808.0px;top:325.0px"></div>
<div class="tx" style="left:1819.34px;top:331px;font-size:30px;line-height:30px;color:#fff;transform:scaleX(1.0139);transform-origin:0 0;">3</div>
<div class="badge" style="left:1010.2px;top:508.0px"></div>
<div class="tx" style="left:1022.03px;top:514px;font-size:30px;line-height:30px;color:#fff;transform:scaleX(0.9542);transform-origin:0 0;">4</div>
<div class="badge" style="left:999.8px;top:624.2px"></div>
<div class="tx" style="left:1010.97px;top:630px;font-size:30px;line-height:30px;color:#fff;transform:scaleX(1.0246);transform-origin:0 0;">5</div>
</body></html>
